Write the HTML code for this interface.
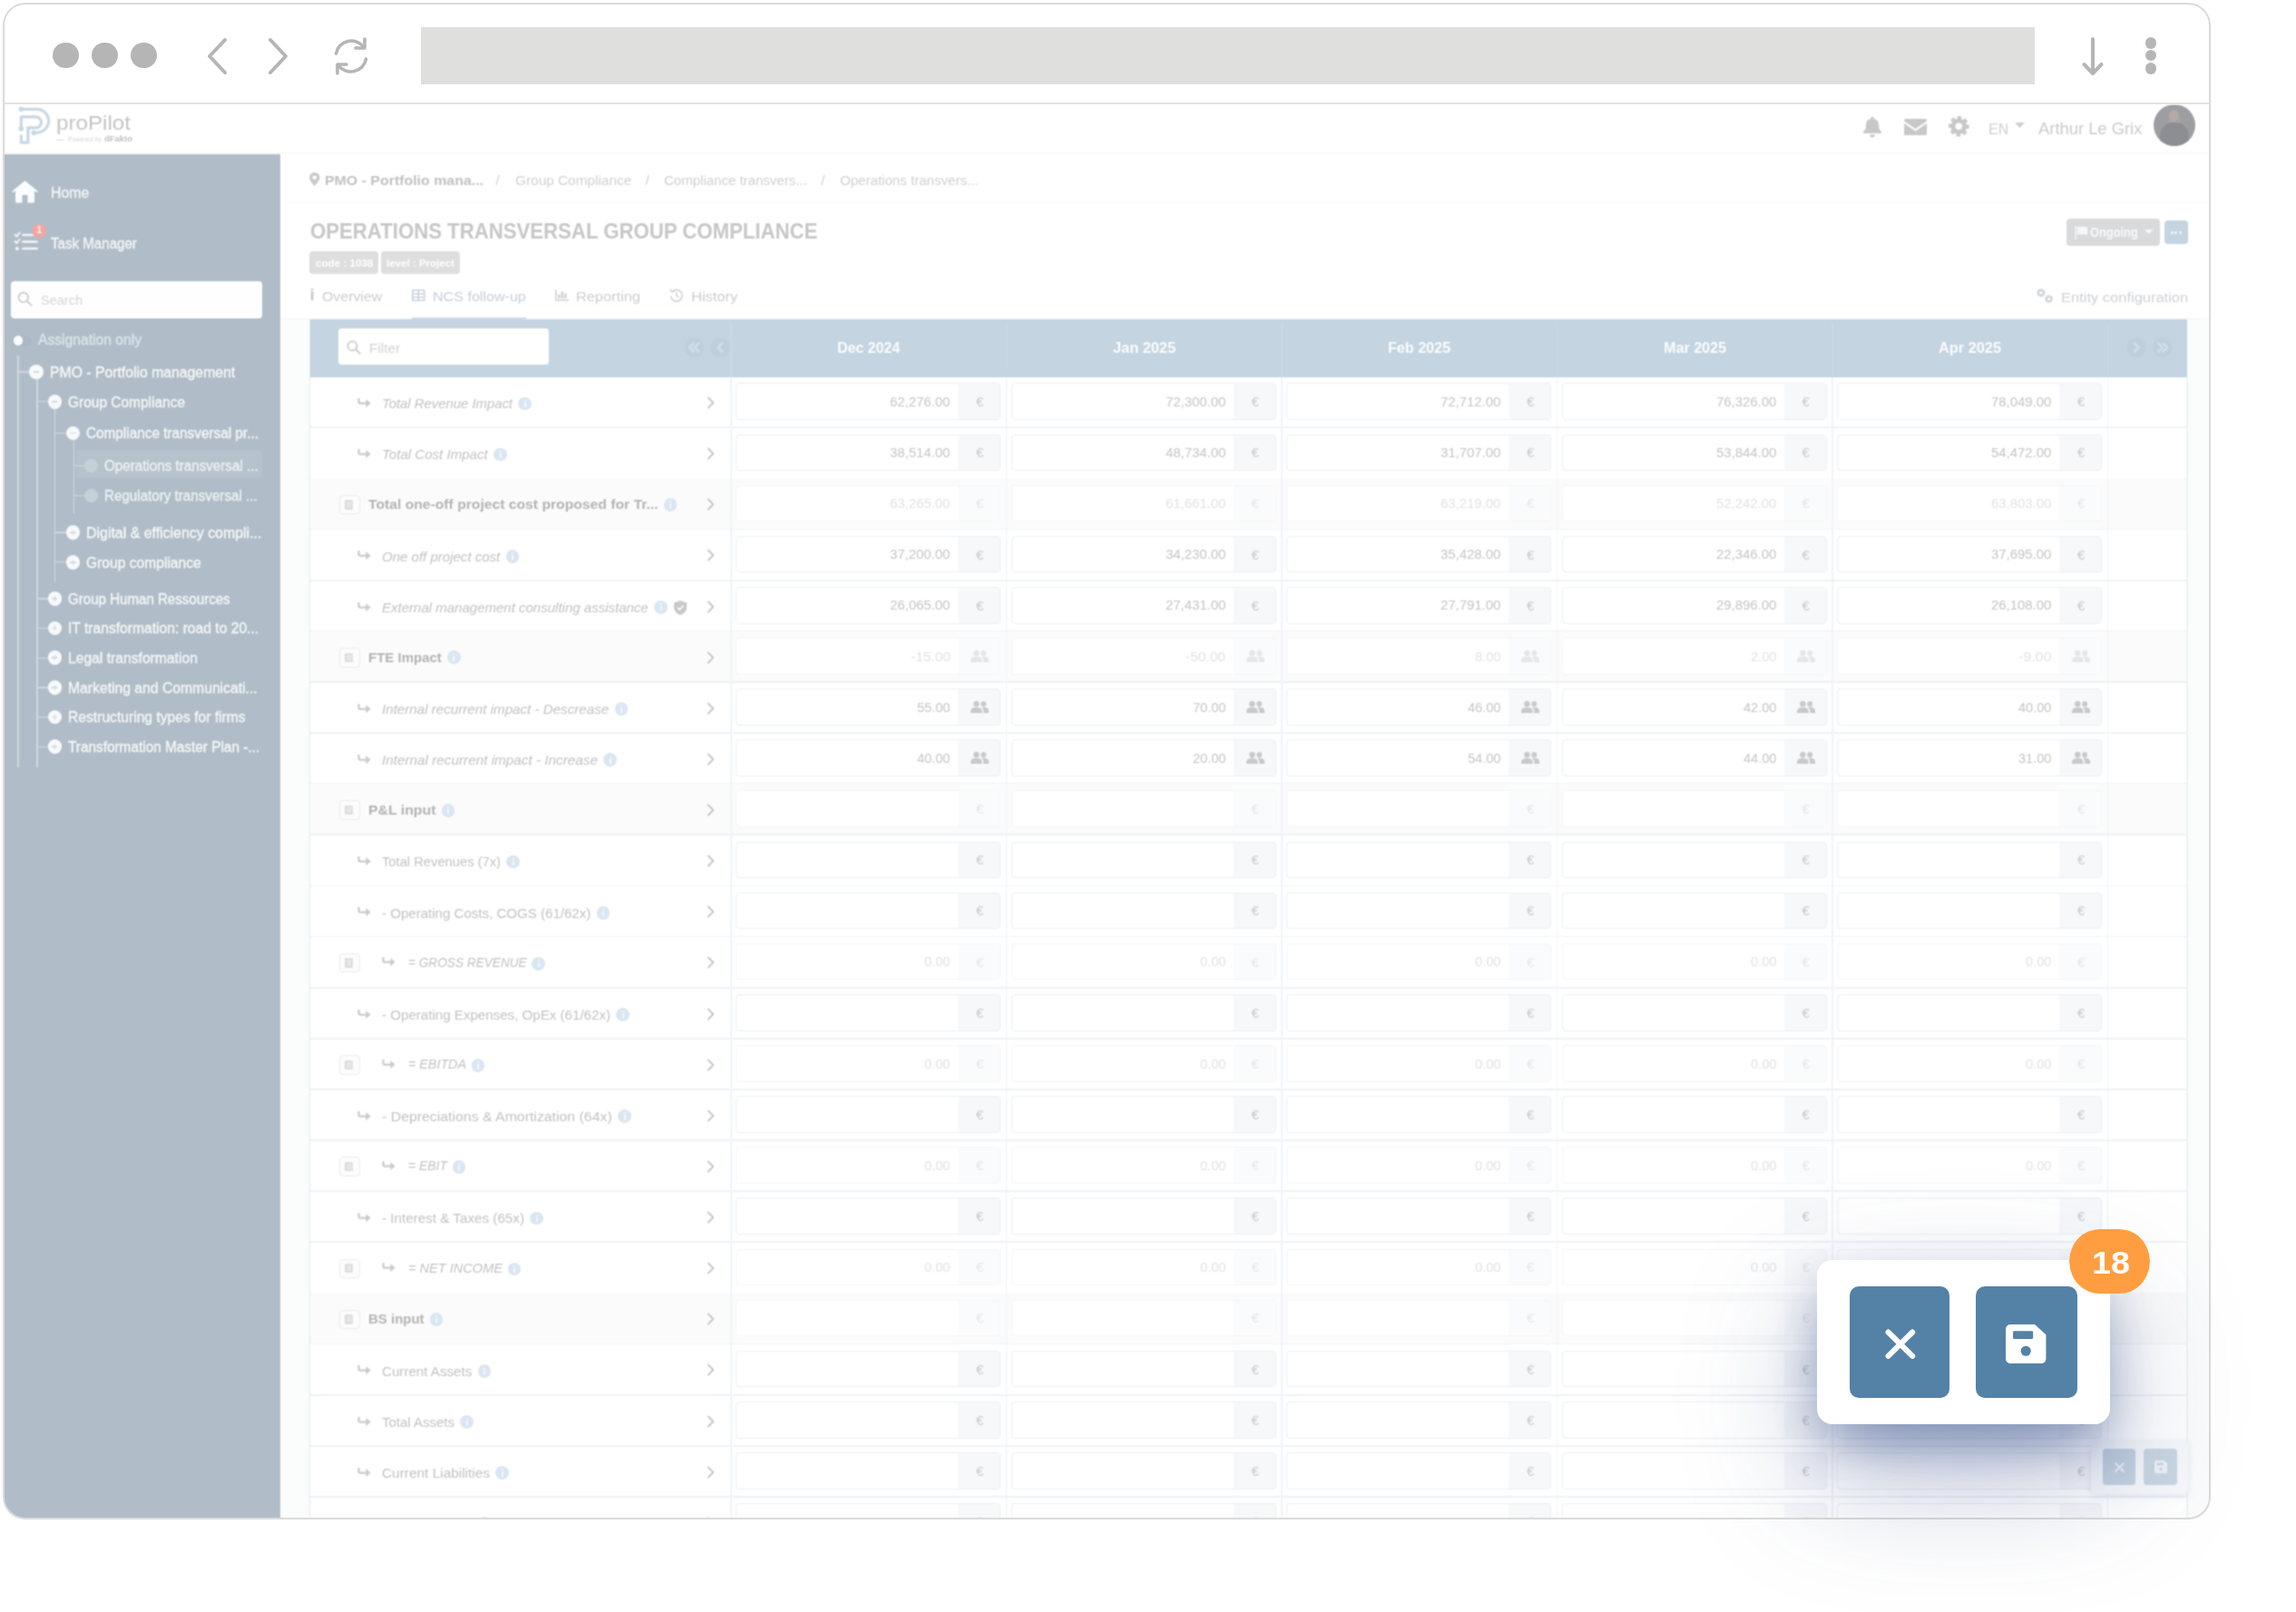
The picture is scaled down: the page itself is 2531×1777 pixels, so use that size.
<!DOCTYPE html>
<html lang="en"><head><meta charset="utf-8"><title>proPilot - NCS follow-up</title>
<style>
html,body{margin:0;padding:0;background:#fff;}
body{width:2531px;height:1777px;position:relative;overflow:hidden;font-family:"Liberation Sans", sans-serif;}
div,svg,span.t{position:absolute;}
span.t{white-space:nowrap;line-height:1;transform-origin:0 50%;}
#app{left:0;top:0;width:2531px;height:1777px;clip-path:inset(115.4px 94.4px 102.7px 4px round 0 0 23px 23px);filter:url(#soft);}
#chrome{left:0;top:0;width:2531px;height:116px;clip-path:inset(4px 94.4px 0 4px round 23px 23px 0 0);}
#frame{left:2.6px;top:2.6px;width:2430.4px;height:1668.1px;border:2.5px solid #dbdbd9;border-radius:25px;pointer-events:none;}
</style></head>
<body>
<svg width="0" height="0" style="left:0;top:0"><filter id="soft" x="0" y="0" width="100%" height="100%" color-interpolation-filters="sRGB"><feConvolveMatrix order="3" kernelMatrix="1 2 1 2 4 2 1 2 1" divisor="16" edgeMode="duplicate" preserveAlpha="true"/></filter></svg>
<div id="app">
<div style="left:0.0px;top:100.0px;width:2531.0px;height:1677.0px;background:#fff;"></div>
<div style="left:0.0px;top:167.8px;width:2531.0px;height:1.5px;background:#f1f3f5;"></div>
<svg style="left:19.0px;top:115.6px;" width="41.0" height="45.4" viewBox="0 0 38 42"><g fill="none" stroke="#c9d8e3" stroke-width="3" stroke-linejoin="round"><path d="M4 4 H20 A12 12 0 0 1 20 28 H17"/><path d="M4 24 V12 H19 A5.5 5.5 0 0 1 19 23 H11 V38 H4 V30"/></g><circle cx="4" cy="4" r="2.6" fill="#c9d8e3"/><circle cx="4" cy="24" r="2.6" fill="#c9d8e3"/><circle cx="17" cy="28" r="2.6" fill="#c9d8e3"/></svg>
<span class="t" id="t1" style="left:62.0px;top:124.9px;font-size:22.5px;color:#c4c4c4;transform:scaleX(1.0747);">proPilot</span>
<span class="t" id="t2" style="left:75.0px;top:150.8px;font-size:6.5px;color:#d4d4d4;transform:scaleX(1.0778);">Powered by</span>
<span class="t" id="t3" style="left:114.5px;top:149.4px;font-size:8.5px;color:#c0c0c0;font-weight:700;transform:scaleX(1.1121);">dFakto</span>
<div style="left:62.0px;top:154.2px;width:9.0px;height:0.8px;background:#ddd;"></div>
<svg style="left:2053.0px;top:127.0px;" width="22.0" height="25.0" viewBox="0 0 22 25"><path d="M11 1.5 a1.6 1.6 0 0 1 1.6 1.6 v0.6 a7 7 0 0 1 5.4 6.8 c0 5 1.6 6.4 3 7.8 v1.7 H1 v-1.7 c1.4-1.4 3-2.8 3-7.8 a7 7 0 0 1 5.4-6.8 v-0.6 A1.6 1.6 0 0 1 11 1.5 z M8 21.5 h6 a3 3 0 0 1-6 0 z" fill="#c8c8c8"/></svg>
<svg style="left:2098.5px;top:130.5px;" width="25.0" height="18.5" viewBox="0 0 25 18.5"><path d="M1.5 0 H23.5 A1.5 1.5 0 0 1 25 1.5 V2.6 L12.5 11 L0 2.6 V1.5 A1.5 1.5 0 0 1 1.5 0 z M0 5 L12.5 13.4 L25 5 V17 A1.5 1.5 0 0 1 23.5 18.5 H1.5 A1.5 1.5 0 0 1 0 17 z" fill="#c8c8c8"/></svg>
<svg style="left:2146.9px;top:127.2px;" width="24.6" height="24.6" viewBox="-12.30 -12.30 24.60 24.60"><circle cx="0" cy="0" r="9.49" fill="none" stroke="#c8c8c8" stroke-width="3.62" stroke-dasharray="4.287 3.168" transform="rotate(-11)"/><circle cx="0" cy="0" r="6.33" fill="none" stroke="#c8c8c8" stroke-width="4.97"/></svg>
<span class="t" id="t4" style="left:2192.3px;top:133.8px;font-size:16.5px;color:#cfcfcf;transform:scaleX(0.9685);">EN</span>
<svg style="left:2220.5px;top:134.5px;" width="11.0" height="6.0" viewBox="0 0 11 6"><path d="M0 0 H11 L5.5 6 z" fill="#cfcfcf"/></svg>
<span class="t" id="t5" style="left:2247.2px;top:132.7px;font-size:18.5px;color:#cacaca;transform:scaleX(0.9934);">Arthur Le Grix</span>
<div style="left:2374.0px;top:114.8px;width:46.0px;height:46.0px;border-radius:50%;background:radial-gradient(circle at 50% 40%,#a8a4a6 0 18%,#9d9ea2 19% 100%);overflow:hidden;"><div style="left:17px;top:6px;width:11px;height:13px;border-radius:50%;background:#b5a9a6;"></div><div style="left:7px;top:20px;width:32px;height:34px;border-radius:45% 45% 0 0;background:#8d8e93;"></div></div>
<div style="left:0.0px;top:169.6px;width:309.4px;height:1607.4px;background:#b0bdc8;"></div>
<svg style="left:13.0px;top:197.5px;" width="29.0" height="26.0" viewBox="0 0 29 26"><path d="M14.5 1.2 L28.3 12.6 a0.9 0.9 0 0 1-1.1 1.4 L25 12.3 V24 a1.5 1.5 0 0 1-1.5 1.5 H17.5 V17 H11.5 V25.5 H5.5 A1.5 1.5 0 0 1 4 24 V12.3 L1.8 14 a0.9 0.9 0 0 1-1.1-1.4 z" fill="#fbfcfd"/></svg>
<span class="t" id="t6" style="left:55.5px;top:205.1px;font-size:16.0px;color:#f4f6f8;transform:scaleX(0.9886);-webkit-text-stroke:0.3px currentColor;">Home</span>
<svg style="left:14.5px;top:255.0px;" width="27.0" height="22.0" viewBox="0 0 27 22"><g fill="none" stroke="#f1f4f6" stroke-width="2.6" stroke-linecap="round"><path d="M10.5 4 H25.5 M10.5 11.5 H25.5 M10.5 19 H25.5"/><path d="M1.5 3.6 L3.4 5.6 L6.6 1.6 M1.5 11 L3.4 13 L6.6 9" stroke-width="2" stroke-linejoin="round"/></g><circle cx="3.8" cy="19" r="2" fill="#f1f4f6"/></svg>
<div style="left:35.4px;top:246.6px;width:15.6px;height:15.6px;background:#f0a6a4;border-radius:50%;"></div>
<span class="t" id="t7" style="left:40.6px;top:249.4px;font-size:10.0px;color:#fdf3f3;font-weight:700;">1</span>
<span class="t" id="t8" style="left:55.9px;top:260.9px;font-size:16.0px;color:#f4f6f8;transform:scaleX(0.9443);-webkit-text-stroke:0.3px currentColor;">Task Manager</span>
<div style="left:11.5px;top:310.0px;width:277.1px;height:40.8px;background:#fefefe;border-radius:4px;"></div>
<svg style="left:19.0px;top:321.0px;" width="17.0" height="17.0" viewBox="0 0 17 17"><circle cx="6.8" cy="6.8" r="5.3" fill="none" stroke="#cfcfcf" stroke-width="1.9"/><path d="M10.8 10.8 L15.6 15.6" stroke="#cfcfcf" stroke-width="2" stroke-linecap="round"/></svg>
<span class="t" id="t9" style="left:44.7px;top:323.3px;font-size:15.0px;color:#d6d6d6;transform:scaleX(0.9678);">Search</span>
<div style="left:13.5px;top:369.5px;width:21.5px;height:12.0px;background:#abb8c3;border-radius:6px;"></div>
<div style="left:14.8px;top:370.3px;width:10.4px;height:10.4px;background:#fafbfc;border-radius:50%;"></div>
<span class="t" id="t10" style="left:42.4px;top:367.0px;font-size:16.0px;color:#dde4ea;transform:scaleX(0.9784);-webkit-text-stroke:0.3px currentColor;">Assignation only</span>
<div style="left:19.4px;top:392.0px;width:1.4px;height:454.0px;background:#cfd7de;"></div>
<div style="left:40.3px;top:418.0px;width:1.4px;height:428.0px;background:#cfd7de;"></div>
<div style="left:59.9px;top:451.0px;width:1.4px;height:190.0px;background:#cfd7de;"></div>
<div style="left:80.5px;top:485.0px;width:1.4px;height:81.0px;background:#cfd7de;"></div>
<div style="left:83.5px;top:495.5px;width:205.5px;height:31.0px;background:#b6c2cc;border-radius:3px;"></div>
<div style="left:20.2px;top:409.2px;width:14.0px;height:1.4px;background:#cfd7de;"></div>
<div style="left:32.4px;top:402.1px;width:15.6px;height:15.6px;background:#f7f9fa;border-radius:50%;"></div>
<div style="left:37.0px;top:409.1px;width:6.4px;height:1.6px;background:#d3dbe2;"></div>
<span class="t" id="t11" style="left:54.6px;top:402.6px;font-size:16.0px;color:#f6f8f9;transform:scaleX(0.9855);-webkit-text-stroke:0.3px currentColor;">PMO - Portfolio management</span>
<div style="left:40.4px;top:442.1px;width:14.0px;height:1.4px;background:#cfd7de;"></div>
<div style="left:52.6px;top:435.0px;width:15.6px;height:15.6px;background:#f7f9fa;border-radius:50%;"></div>
<div style="left:57.1px;top:442.0px;width:6.4px;height:1.6px;background:#d3dbe2;"></div>
<span class="t" id="t12" style="left:74.8px;top:435.5px;font-size:16.0px;color:#f6f8f9;transform:scaleX(0.9673);-webkit-text-stroke:0.3px currentColor;">Group Compliance</span>
<div style="left:60.5px;top:476.8px;width:14.0px;height:1.4px;background:#cfd7de;"></div>
<div style="left:72.7px;top:469.7px;width:15.6px;height:15.6px;background:#f7f9fa;border-radius:50%;"></div>
<div style="left:77.3px;top:476.7px;width:6.4px;height:1.6px;background:#d3dbe2;"></div>
<span class="t" id="t13" style="left:95.1px;top:470.2px;font-size:16.0px;color:#f6f8f9;transform:scaleX(0.9576);-webkit-text-stroke:0.3px currentColor;">Compliance transversal pr...</span>
<div style="left:80.7px;top:513.0px;width:14.0px;height:1.4px;background:#cfd7de;"></div>
<div style="left:93.1px;top:506.1px;width:15.2px;height:15.2px;background:#c6d0d9;border-radius:50%;"></div>
<span class="t" id="t14" style="left:115.3px;top:506.4px;font-size:16.0px;color:#eef2f5;transform:scaleX(0.9491);-webkit-text-stroke:0.3px currentColor;">Operations transversal ...</span>
<div style="left:80.7px;top:545.9px;width:14.0px;height:1.4px;background:#cfd7de;"></div>
<div style="left:93.1px;top:539.0px;width:15.2px;height:15.2px;background:#c6d0d9;border-radius:50%;"></div>
<span class="t" id="t15" style="left:115.3px;top:539.3px;font-size:16.0px;color:#eef2f5;transform:scaleX(0.9482);-webkit-text-stroke:0.3px currentColor;">Regulatory transversal ...</span>
<div style="left:60.5px;top:586.2px;width:14.0px;height:1.4px;background:#cfd7de;"></div>
<div style="left:72.7px;top:579.1px;width:15.6px;height:15.6px;background:#f7f9fa;border-radius:50%;"></div>
<div style="left:77.3px;top:586.1px;width:6.4px;height:1.6px;background:#d3dbe2;"></div>
<div style="left:79.7px;top:583.7px;width:1.6px;height:6.4px;background:#d3dbe2;"></div>
<span class="t" id="t16" style="left:95.1px;top:579.6px;font-size:16.0px;color:#f6f8f9;transform:scaleX(0.9946);-webkit-text-stroke:0.3px currentColor;">Digital &amp; efficiency compli...</span>
<div style="left:60.5px;top:619.1px;width:14.0px;height:1.4px;background:#cfd7de;"></div>
<div style="left:72.7px;top:612.0px;width:15.6px;height:15.6px;background:#f7f9fa;border-radius:50%;"></div>
<div style="left:77.3px;top:619.0px;width:6.4px;height:1.6px;background:#d3dbe2;"></div>
<div style="left:79.7px;top:616.6px;width:1.6px;height:6.4px;background:#d3dbe2;"></div>
<span class="t" id="t17" style="left:95.1px;top:612.5px;font-size:16.0px;color:#f6f8f9;transform:scaleX(0.9758);-webkit-text-stroke:0.3px currentColor;">Group compliance</span>
<div style="left:40.4px;top:659.3px;width:14.0px;height:1.4px;background:#cfd7de;"></div>
<div style="left:52.6px;top:652.2px;width:15.6px;height:15.6px;background:#f7f9fa;border-radius:50%;"></div>
<div style="left:57.1px;top:659.2px;width:6.4px;height:1.6px;background:#d3dbe2;"></div>
<div style="left:59.6px;top:656.8px;width:1.6px;height:6.4px;background:#d3dbe2;"></div>
<span class="t" id="t18" style="left:74.8px;top:652.7px;font-size:16.0px;color:#f6f8f9;transform:scaleX(0.9431);-webkit-text-stroke:0.3px currentColor;">Group Human Ressources</span>
<div style="left:40.4px;top:691.6px;width:14.0px;height:1.4px;background:#cfd7de;"></div>
<div style="left:52.6px;top:684.5px;width:15.6px;height:15.6px;background:#f7f9fa;border-radius:50%;"></div>
<div style="left:57.1px;top:691.5px;width:6.4px;height:1.6px;background:#d3dbe2;"></div>
<div style="left:59.6px;top:689.1px;width:1.6px;height:6.4px;background:#d3dbe2;"></div>
<span class="t" id="t19" style="left:74.8px;top:685.0px;font-size:16.0px;color:#f6f8f9;transform:scaleX(0.9778);-webkit-text-stroke:0.3px currentColor;">IT transformation: road to 20...</span>
<div style="left:40.4px;top:724.5px;width:14.0px;height:1.4px;background:#cfd7de;"></div>
<div style="left:52.6px;top:717.4px;width:15.6px;height:15.6px;background:#f7f9fa;border-radius:50%;"></div>
<div style="left:57.1px;top:724.4px;width:6.4px;height:1.6px;background:#d3dbe2;"></div>
<div style="left:59.6px;top:722.0px;width:1.6px;height:6.4px;background:#d3dbe2;"></div>
<span class="t" id="t20" style="left:74.8px;top:717.9px;font-size:16.0px;color:#f6f8f9;transform:scaleX(0.9794);-webkit-text-stroke:0.3px currentColor;">Legal transformation</span>
<div style="left:40.4px;top:757.4px;width:14.0px;height:1.4px;background:#cfd7de;"></div>
<div style="left:52.6px;top:750.3px;width:15.6px;height:15.6px;background:#f7f9fa;border-radius:50%;"></div>
<div style="left:57.1px;top:757.3px;width:6.4px;height:1.6px;background:#d3dbe2;"></div>
<div style="left:59.6px;top:754.9px;width:1.6px;height:6.4px;background:#d3dbe2;"></div>
<span class="t" id="t21" style="left:74.8px;top:750.8px;font-size:16.0px;color:#f6f8f9;transform:scaleX(0.9817);-webkit-text-stroke:0.3px currentColor;">Marketing and Communicati...</span>
<div style="left:40.4px;top:789.7px;width:14.0px;height:1.4px;background:#cfd7de;"></div>
<div style="left:52.6px;top:782.6px;width:15.6px;height:15.6px;background:#f7f9fa;border-radius:50%;"></div>
<div style="left:57.1px;top:789.6px;width:6.4px;height:1.6px;background:#d3dbe2;"></div>
<div style="left:59.6px;top:787.2px;width:1.6px;height:6.4px;background:#d3dbe2;"></div>
<span class="t" id="t22" style="left:74.8px;top:783.1px;font-size:16.0px;color:#f6f8f9;transform:scaleX(0.9779);-webkit-text-stroke:0.3px currentColor;">Restructuring types for firms</span>
<div style="left:40.4px;top:822.5px;width:14.0px;height:1.4px;background:#cfd7de;"></div>
<div style="left:52.6px;top:815.4px;width:15.6px;height:15.6px;background:#f7f9fa;border-radius:50%;"></div>
<div style="left:57.1px;top:822.4px;width:6.4px;height:1.6px;background:#d3dbe2;"></div>
<div style="left:59.6px;top:820.0px;width:1.6px;height:6.4px;background:#d3dbe2;"></div>
<span class="t" id="t23" style="left:74.8px;top:815.9px;font-size:16.0px;color:#f6f8f9;transform:scaleX(0.9601);-webkit-text-stroke:0.3px currentColor;">Transformation Master Plan -...</span>
<div style="left:309.4px;top:169.3px;width:2221.6px;height:181.9px;background:#fff;"></div>
<div style="left:309.4px;top:351.2px;width:2221.6px;height:1425.8px;background:#fbfcfc;"></div>
<div style="left:309.4px;top:223.0px;width:2221.6px;height:1.4px;background:#f9fafa;"></div>
<div style="left:309.4px;top:350.5px;width:2221.6px;height:1.3px;background:#f2f4f6;"></div>
<svg style="left:341.2px;top:189.5px;" width="11.5" height="15.5" viewBox="0 0 11.5 15.5"><path d="M5.75 0 A5.75 5.75 0 0 1 11.5 5.75 C11.5 9 7.5 12.5 5.75 15.5 C4 12.5 0 9 0 5.75 A5.75 5.75 0 0 1 5.75 0 z M5.75 3.4 a2.3 2.3 0 1 0 0.01 0 z" fill="#c9c9c9" fill-rule="evenodd"/></svg>
<span class="t" id="t24" style="left:358.0px;top:191.3px;font-size:15.5px;color:#c2c2c2;font-weight:700;transform:scaleX(1.0263);">PMO - Portfolio mana...</span>
<span class="t" id="t25" style="left:546.5px;top:191.3px;font-size:15.5px;color:#d0d0d0;">/</span>
<span class="t" id="t26" style="left:567.8px;top:191.3px;font-size:15.5px;color:#d0d0d0;transform:scaleX(0.9920);">Group Compliance</span>
<span class="t" id="t27" style="left:711.5px;top:191.3px;font-size:15.5px;color:#d0d0d0;">/</span>
<span class="t" id="t28" style="left:732.3px;top:191.3px;font-size:15.5px;color:#d0d0d0;transform:scaleX(0.9686);">Compliance transvers...</span>
<span class="t" id="t29" style="left:905.0px;top:191.3px;font-size:15.5px;color:#d0d0d0;">/</span>
<span class="t" id="t30" style="left:925.7px;top:191.3px;font-size:15.5px;color:#d0d0d0;transform:scaleX(0.9732);">Operations transvers...</span>
<span class="t" id="t31" style="left:342.0px;top:242.6px;font-size:24.5px;color:#c8c6c6;font-weight:700;transform:scaleX(0.9050);">OPERATIONS TRANSVERSAL GROUP COMPLIANCE</span>
<div style="left:341.4px;top:277.4px;width:75.2px;height:24.8px;background:#dedede;border-radius:4px;"></div>
<span class="t" id="t32" style="left:347.5px;top:285.4px;font-size:11.5px;color:#ffffff;font-weight:700;transform:scaleX(1.0135);">code : 1038</span>
<div style="left:420.0px;top:277.4px;width:87.2px;height:24.8px;background:#dedede;border-radius:4px;"></div>
<span class="t" id="t33" style="left:426.0px;top:285.4px;font-size:11.5px;color:#ffffff;font-weight:700;transform:scaleX(1.0027);">level : Project</span>
<div style="left:2277.9px;top:240.9px;width:103.2px;height:30.1px;background:#d9dadc;border-radius:4px;"></div>
<svg style="left:2287.0px;top:248.5px;" width="14.5" height="15.0" viewBox="0 0 14.5 15"><path d="M0.4 0 h1.5 v15 h-1.5 z M2.8 1 h11.3 v8.5 h-11.3 z" fill="#f7f7f7"/></svg>
<span class="t" id="t34" style="left:2304.0px;top:249.1px;font-size:14.0px;color:#f8f8f8;font-weight:700;transform:scaleX(0.9175);">Ongoing</span>
<svg style="left:2364.0px;top:253.0px;" width="9.5" height="5.2" viewBox="0 0 9.5 5.2"><path d="M0 0 H9.5 L4.75 5.2 z" fill="#f7f7f7"/></svg>
<div style="left:2385.5px;top:243.0px;width:26.7px;height:26.0px;background:#c4d4e0;border-radius:4px;"></div>
<div style="left:2393.1px;top:254.5px;width:3.0px;height:3.0px;background:#f3f6f9;border-radius:50%;"></div>
<div style="left:2397.3px;top:254.5px;width:3.0px;height:3.0px;background:#f3f6f9;border-radius:50%;"></div>
<div style="left:2401.5px;top:254.5px;width:3.0px;height:3.0px;background:#f3f6f9;border-radius:50%;"></div>
<span class="t" id="t35" style="left:341.5px;top:315.2px;font-size:19.0px;color:#c9c9c9;font-weight:700;font-family:"Liberation Serif",serif;">i</span>
<span class="t" id="t36" style="left:355.3px;top:319.2px;font-size:15.5px;color:#cdcdcd;transform:scaleX(1.0246);">Overview</span>
<svg style="left:454.0px;top:318.6px;" width="14.5" height="13.0" viewBox="0 0 15.5 13.5"><g fill="none" stroke="#c3cfda" stroke-width="1.5"><rect x="0.75" y="0.75" width="14" height="12"/><path d="M0.75 5 H14.75 M7.75 0.75 V12.75 M0.75 9 H14.75"/></g></svg>
<span class="t" id="t37" style="left:477.2px;top:319.2px;font-size:15.5px;color:#c3cfda;transform:scaleX(1.0377);">NCS follow-up</span>
<div style="left:453.9px;top:349.6px;width:126.1px;height:2.2px;background:#cddbe6;"></div>
<svg style="left:611.5px;top:318.8px;" width="15.0" height="13.0" viewBox="0 0 16 13.5"><g fill="#d0d0d0"><path d="M0 0 h1.6 v11.9 h14.4 v1.6 h-16 z"/><rect x="3.3" y="6" width="2.6" height="4.5"/><rect x="7" y="2.5" width="2.6" height="8"/><rect x="10.7" y="4.5" width="2.6" height="6"/></g></svg>
<span class="t" id="t38" style="left:635.0px;top:319.2px;font-size:15.5px;color:#cdcdcd;transform:scaleX(1.0533);">Reporting</span>
<svg style="left:737.8px;top:317.5px;" width="15.5" height="15.5" viewBox="0 0 16 16"><g fill="none" stroke="#cdcdcd" stroke-width="1.5" stroke-linecap="round"><path d="M3.2 3.6 A6.5 6.5 0 1 1 1.6 9.2"/><path d="M0.9 1.6 L3 4 L5.6 2.8"/><path d="M8 4.6 V8.3 L10.3 9.8"/></g></svg>
<span class="t" id="t39" style="left:761.6px;top:319.2px;font-size:15.5px;color:#cdcdcd;transform:scaleX(1.0615);">History</span>
<svg style="left:2243.7px;top:316.7px;" width="11.6" height="11.6" viewBox="-5.80 -5.80 11.60 11.60"><circle cx="0" cy="0" r="4.03" fill="none" stroke="#cfd3d8" stroke-width="1.54" stroke-dasharray="1.821 1.346" transform="rotate(-11)"/><circle cx="0" cy="0" r="2.69" fill="none" stroke="#cfd3d8" stroke-width="2.11"/></svg>
<svg style="left:2252.7px;top:323.9px;" width="11.2" height="11.2" viewBox="-5.60 -5.60 11.20 11.20"><circle cx="0" cy="0" r="3.86" fill="none" stroke="#cfd3d8" stroke-width="1.47" stroke-dasharray="1.745 1.290" transform="rotate(-11)"/><circle cx="0" cy="0" r="2.58" fill="none" stroke="#cfd3d8" stroke-width="2.02"/></svg>
<span class="t" id="t40" style="left:2272.0px;top:319.7px;font-size:15.5px;color:#cdd1d6;transform:scaleX(1.0635);">Entity configuration</span>
<div style="left:341.6px;top:352.3px;width:2069.6px;height:1424.7px;background:#fff;"></div>
<div style="left:341.6px;top:352.3px;width:2069.6px;height:63.3px;background:#c4d4e0;"></div>
<div style="left:373.4px;top:362.0px;width:231.4px;height:40.0px;background:#fff;border-radius:4px;"></div>
<svg style="left:381.5px;top:374.5px;" width="16.0" height="16.0" viewBox="0 0 17 17"><circle cx="6.8" cy="6.8" r="5.3" fill="none" stroke="#c9c9c9" stroke-width="1.9"/><path d="M10.8 10.8 L15.6 15.6" stroke="#c9c9c9" stroke-width="2" stroke-linecap="round"/></svg>
<span class="t" id="t41" style="left:406.9px;top:375.6px;font-size:15.0px;color:#d2d2d2;transform:scaleX(1.0227);">Filter</span>
<div style="left:754.0px;top:371.6px;width:22.0px;height:22.0px;background:#bfd0dc;border-radius:50%;"></div>
<svg style="left:757.0px;top:374.6px;" width="16.0" height="16.0" viewBox="-8 -8 16 16"><path d="M-0.5 -4.5 L-5 0 L-0.5 4.5 M5 -4.5 L0.5 0 L5 4.5" fill="none" stroke="#d2dfe9" stroke-width="2.5" stroke-linecap="round" stroke-linejoin="round"/></svg>
<div style="left:782.6px;top:371.6px;width:22.0px;height:22.0px;background:#bfd0dc;border-radius:50%;"></div>
<svg style="left:785.6px;top:374.6px;" width="16.0" height="16.0" viewBox="-8 -8 16 16"><path d="M2 -4.5 L-2.5 0 L2 4.5" fill="none" stroke="#d2dfe9" stroke-width="2.5" stroke-linecap="round" stroke-linejoin="round"/></svg>
<div style="left:2344.0px;top:371.6px;width:22.0px;height:22.0px;background:#bfd0dc;border-radius:50%;"></div>
<svg style="left:2347.0px;top:374.6px;" width="16.0" height="16.0" viewBox="-8 -8 16 16"><path d="M-2 -4.5 L2.5 0 L-2 4.5" fill="none" stroke="#d2dfe9" stroke-width="2.5" stroke-linecap="round" stroke-linejoin="round"/></svg>
<div style="left:2372.6px;top:371.6px;width:22.0px;height:22.0px;background:#bfd0dc;border-radius:50%;"></div>
<svg style="left:2375.6px;top:374.6px;" width="16.0" height="16.0" viewBox="-8 -8 16 16"><path d="M0.5 -4.5 L5 0 L0.5 4.5 M-5 -4.5 L-0.5 0 L-5 4.5" fill="none" stroke="#d2dfe9" stroke-width="2.5" stroke-linecap="round" stroke-linejoin="round"/></svg>
<span class="t" id="t42" style="left:923.2px;top:375.7px;font-size:16.0px;color:#fbfcfd;font-weight:700;transform:scaleX(0.9944);">Dec 2024</span>
<span class="t" id="t43" style="left:1226.8px;top:375.7px;font-size:16.0px;color:#fbfcfd;font-weight:700;transform:scaleX(1.0206);">Jan 2025</span>
<span class="t" id="t44" style="left:1530.2px;top:375.7px;font-size:16.0px;color:#fbfcfd;font-weight:700;transform:scaleX(1.0075);">Feb 2025</span>
<span class="t" id="t45" style="left:1833.8px;top:375.7px;font-size:16.0px;color:#fbfcfd;font-weight:700;transform:scaleX(1.0073);">Mar 2025</span>
<span class="t" id="t46" style="left:2137.2px;top:375.7px;font-size:16.0px;color:#fbfcfd;font-weight:700;transform:scaleX(1.0208);">Apr 2025</span>
<div style="left:805.3px;top:356.0px;width:1.4px;height:59.6px;background:#cbd9e4;"></div>
<div style="left:1108.8px;top:356.0px;width:1.4px;height:59.6px;background:#cbd9e4;"></div>
<div style="left:1412.3px;top:356.0px;width:1.4px;height:59.6px;background:#cbd9e4;"></div>
<div style="left:1715.8px;top:356.0px;width:1.4px;height:59.6px;background:#cbd9e4;"></div>
<div style="left:2019.3px;top:356.0px;width:1.4px;height:59.6px;background:#cbd9e4;"></div>
<div style="left:2322.8px;top:356.0px;width:1.4px;height:59.6px;background:#cbd9e4;"></div>
<div style="left:341.6px;top:470.4px;width:2069.6px;height:1.8px;background:#eef2f7;"></div>
<svg style="left:393.8px;top:439.1px;" width="15.5" height="11.0" viewBox="0 0 15 11"><path d="M1.3 0.8 V4 Q1.3 5.6 3 5.6 H10" fill="none" stroke="#cbcbcb" stroke-width="2.3" stroke-linecap="round"/><path d="M9.2 1 L14.4 5.6 L9.2 10.2 z" fill="#cbcbcb"/></svg>
<span class="t" id="t47" style="left:421.3px;top:437.2px;font-size:15.5px;color:#c2c2c2;font-style:italic;transform:scaleX(0.9586);">Total Revenue Impact</span>
<div style="left:571.4px;top:437.6px;width:14.8px;height:14.8px;background:#dae6f1;border-radius:50%;"></div>
<div style="left:577.8px;top:443.6px;width:2.0px;height:5.4px;background:#f3f7fa;"></div>
<div style="left:577.7px;top:440.6px;width:2.2px;height:2.0px;background:#f3f7fa;border-radius:50%;"></div>
<svg style="left:779.0px;top:437.1px;" width="9.0" height="14.0" viewBox="0 0 9 14"><path d="M1.8 1.5 L7.2 7 L1.8 12.5" fill="none" stroke="#c6c6c6" stroke-width="1.8" stroke-linecap="round" stroke-linejoin="round"/></svg>
<div style="left:811.2px;top:422.4px;width:292.2px;height:40.8px;background:#fff;border:1.3px solid #eceef2;border-radius:4px;box-sizing:border-box;"></div>
<div style="left:1056.2px;top:423.4px;width:46.2px;height:38.8px;background:#f7f8fa;border-radius:0 3px 3px 0;"></div>
<span class="t" id="t48" style="left:1076.0px;top:435.1px;font-size:15.0px;color:#c9c9c9;">€</span>
<span class="t" id="t49" style="left:981.3px;top:434.9px;font-size:15.0px;color:#c4c4c4;transform:scaleX(0.9920);">62,276.00</span>
<div style="left:1114.7px;top:422.4px;width:292.2px;height:40.8px;background:#fff;border:1.3px solid #eceef2;border-radius:4px;box-sizing:border-box;"></div>
<div style="left:1359.7px;top:423.4px;width:46.2px;height:38.8px;background:#f7f8fa;border-radius:0 3px 3px 0;"></div>
<span class="t" id="t50" style="left:1379.5px;top:435.1px;font-size:15.0px;color:#c9c9c9;">€</span>
<span class="t" id="t51" style="left:1284.8px;top:434.9px;font-size:15.0px;color:#c4c4c4;transform:scaleX(0.9920);">72,300.00</span>
<div style="left:1418.2px;top:422.4px;width:292.2px;height:40.8px;background:#fff;border:1.3px solid #eceef2;border-radius:4px;box-sizing:border-box;"></div>
<div style="left:1663.2px;top:423.4px;width:46.2px;height:38.8px;background:#f7f8fa;border-radius:0 3px 3px 0;"></div>
<span class="t" id="t52" style="left:1683.0px;top:435.1px;font-size:15.0px;color:#c9c9c9;">€</span>
<span class="t" id="t53" style="left:1588.3px;top:434.9px;font-size:15.0px;color:#c4c4c4;transform:scaleX(0.9920);">72,712.00</span>
<div style="left:1721.7px;top:422.4px;width:292.2px;height:40.8px;background:#fff;border:1.3px solid #eceef2;border-radius:4px;box-sizing:border-box;"></div>
<div style="left:1966.7px;top:423.4px;width:46.2px;height:38.8px;background:#f7f8fa;border-radius:0 3px 3px 0;"></div>
<span class="t" id="t54" style="left:1986.5px;top:435.1px;font-size:15.0px;color:#c9c9c9;">€</span>
<span class="t" id="t55" style="left:1891.8px;top:434.9px;font-size:15.0px;color:#c4c4c4;transform:scaleX(0.9920);">76,326.00</span>
<div style="left:2025.2px;top:422.4px;width:292.2px;height:40.8px;background:#fff;border:1.3px solid #eceef2;border-radius:4px;box-sizing:border-box;"></div>
<div style="left:2270.2px;top:423.4px;width:46.2px;height:38.8px;background:#f7f8fa;border-radius:0 3px 3px 0;"></div>
<span class="t" id="t56" style="left:2290.0px;top:435.1px;font-size:15.0px;color:#c9c9c9;">€</span>
<span class="t" id="t57" style="left:2195.3px;top:434.9px;font-size:15.0px;color:#c4c4c4;transform:scaleX(0.9920);">78,049.00</span>
<div style="left:341.6px;top:526.5px;width:2069.6px;height:1.8px;background:#eef2f7;"></div>
<svg style="left:393.8px;top:495.2px;" width="15.5" height="11.0" viewBox="0 0 15 11"><path d="M1.3 0.8 V4 Q1.3 5.6 3 5.6 H10" fill="none" stroke="#cbcbcb" stroke-width="2.3" stroke-linecap="round"/><path d="M9.2 1 L14.4 5.6 L9.2 10.2 z" fill="#cbcbcb"/></svg>
<span class="t" id="t58" style="left:421.3px;top:493.4px;font-size:15.5px;color:#c2c2c2;font-style:italic;transform:scaleX(0.9721);">Total Cost Impact</span>
<div style="left:544.1px;top:493.7px;width:14.8px;height:14.8px;background:#dae6f1;border-radius:50%;"></div>
<div style="left:550.5px;top:499.7px;width:2.0px;height:5.4px;background:#f3f7fa;"></div>
<div style="left:550.4px;top:496.7px;width:2.2px;height:2.0px;background:#f3f7fa;border-radius:50%;"></div>
<svg style="left:779.0px;top:493.2px;" width="9.0" height="14.0" viewBox="0 0 9 14"><path d="M1.8 1.5 L7.2 7 L1.8 12.5" fill="none" stroke="#c6c6c6" stroke-width="1.8" stroke-linecap="round" stroke-linejoin="round"/></svg>
<div style="left:811.2px;top:478.5px;width:292.2px;height:40.8px;background:#fff;border:1.3px solid #eceef2;border-radius:4px;box-sizing:border-box;"></div>
<div style="left:1056.2px;top:479.5px;width:46.2px;height:38.8px;background:#f7f8fa;border-radius:0 3px 3px 0;"></div>
<span class="t" id="t59" style="left:1076.0px;top:491.2px;font-size:15.0px;color:#c9c9c9;">€</span>
<span class="t" id="t60" style="left:981.3px;top:491.0px;font-size:15.0px;color:#c4c4c4;transform:scaleX(0.9920);">38,514.00</span>
<div style="left:1114.7px;top:478.5px;width:292.2px;height:40.8px;background:#fff;border:1.3px solid #eceef2;border-radius:4px;box-sizing:border-box;"></div>
<div style="left:1359.7px;top:479.5px;width:46.2px;height:38.8px;background:#f7f8fa;border-radius:0 3px 3px 0;"></div>
<span class="t" id="t61" style="left:1379.5px;top:491.2px;font-size:15.0px;color:#c9c9c9;">€</span>
<span class="t" id="t62" style="left:1284.8px;top:491.0px;font-size:15.0px;color:#c4c4c4;transform:scaleX(0.9920);">48,734.00</span>
<div style="left:1418.2px;top:478.5px;width:292.2px;height:40.8px;background:#fff;border:1.3px solid #eceef2;border-radius:4px;box-sizing:border-box;"></div>
<div style="left:1663.2px;top:479.5px;width:46.2px;height:38.8px;background:#f7f8fa;border-radius:0 3px 3px 0;"></div>
<span class="t" id="t63" style="left:1683.0px;top:491.2px;font-size:15.0px;color:#c9c9c9;">€</span>
<span class="t" id="t64" style="left:1588.3px;top:491.0px;font-size:15.0px;color:#c4c4c4;transform:scaleX(0.9920);">31,707.00</span>
<div style="left:1721.7px;top:478.5px;width:292.2px;height:40.8px;background:#fff;border:1.3px solid #eceef2;border-radius:4px;box-sizing:border-box;"></div>
<div style="left:1966.7px;top:479.5px;width:46.2px;height:38.8px;background:#f7f8fa;border-radius:0 3px 3px 0;"></div>
<span class="t" id="t65" style="left:1986.5px;top:491.2px;font-size:15.0px;color:#c9c9c9;">€</span>
<span class="t" id="t66" style="left:1891.8px;top:491.0px;font-size:15.0px;color:#c4c4c4;transform:scaleX(0.9920);">53,844.00</span>
<div style="left:2025.2px;top:478.5px;width:292.2px;height:40.8px;background:#fff;border:1.3px solid #eceef2;border-radius:4px;box-sizing:border-box;"></div>
<div style="left:2270.2px;top:479.5px;width:46.2px;height:38.8px;background:#f7f8fa;border-radius:0 3px 3px 0;"></div>
<span class="t" id="t67" style="left:2290.0px;top:491.2px;font-size:15.0px;color:#c9c9c9;">€</span>
<span class="t" id="t68" style="left:2195.3px;top:491.0px;font-size:15.0px;color:#c4c4c4;transform:scaleX(0.9920);">54,472.00</span>
<div style="left:341.6px;top:527.4px;width:2069.6px;height:56.1px;background:#fbfbfb;"></div>
<div style="left:341.6px;top:582.6px;width:2069.6px;height:1.8px;background:#eef2f7;"></div>
<div style="left:373.6px;top:545.6px;width:23.2px;height:21.6px;background:#fcfcfc;border:1.2px solid #ececec;border-radius:4px;box-sizing:border-box;"><div style="left:5.8px;top:4.6px;width:9px;height:10.4px;background:#dedede;border-radius:1.5px;"></div><div style="left:8px;top:6.6px;width:4.6px;height:6px;background:#e8e8e8;"></div></div>
<span class="t" id="t69" style="left:406.0px;top:548.4px;font-size:15.5px;color:#b4b4b4;font-weight:700;transform:scaleX(1.0118);">Total one-off project cost proposed for Tr...</span>
<div style="left:731.6px;top:549.0px;width:14.8px;height:14.8px;background:#dae6f1;border-radius:50%;"></div>
<div style="left:738.0px;top:555.0px;width:2.0px;height:5.4px;background:#f3f7fa;"></div>
<div style="left:737.9px;top:552.0px;width:2.2px;height:2.0px;background:#f3f7fa;border-radius:50%;"></div>
<svg style="left:779.0px;top:549.3px;" width="9.0" height="14.0" viewBox="0 0 9 14"><path d="M1.8 1.5 L7.2 7 L1.8 12.5" fill="none" stroke="#c6c6c6" stroke-width="1.8" stroke-linecap="round" stroke-linejoin="round"/></svg>
<div style="left:811.2px;top:534.6px;width:292.2px;height:40.8px;background:#fff;border:1.3px solid #f4f5f8;border-radius:4px;box-sizing:border-box;"></div>
<div style="left:1056.2px;top:535.6px;width:46.2px;height:38.8px;background:#fafbfc;border-radius:0 3px 3px 0;"></div>
<span class="t" id="t70" style="left:1076.0px;top:547.4px;font-size:15.0px;color:#e6e6e6;">€</span>
<span class="t" id="t71" style="left:981.3px;top:547.2px;font-size:15.0px;color:#e2e2e2;transform:scaleX(0.9920);">63,265.00</span>
<div style="left:1114.7px;top:534.6px;width:292.2px;height:40.8px;background:#fff;border:1.3px solid #f4f5f8;border-radius:4px;box-sizing:border-box;"></div>
<div style="left:1359.7px;top:535.6px;width:46.2px;height:38.8px;background:#fafbfc;border-radius:0 3px 3px 0;"></div>
<span class="t" id="t72" style="left:1379.5px;top:547.4px;font-size:15.0px;color:#e6e6e6;">€</span>
<span class="t" id="t73" style="left:1284.8px;top:547.2px;font-size:15.0px;color:#e2e2e2;transform:scaleX(0.9920);">61,661.00</span>
<div style="left:1418.2px;top:534.6px;width:292.2px;height:40.8px;background:#fff;border:1.3px solid #f4f5f8;border-radius:4px;box-sizing:border-box;"></div>
<div style="left:1663.2px;top:535.6px;width:46.2px;height:38.8px;background:#fafbfc;border-radius:0 3px 3px 0;"></div>
<span class="t" id="t74" style="left:1683.0px;top:547.4px;font-size:15.0px;color:#e6e6e6;">€</span>
<span class="t" id="t75" style="left:1588.3px;top:547.2px;font-size:15.0px;color:#e2e2e2;transform:scaleX(0.9920);">63,219.00</span>
<div style="left:1721.7px;top:534.6px;width:292.2px;height:40.8px;background:#fff;border:1.3px solid #f4f5f8;border-radius:4px;box-sizing:border-box;"></div>
<div style="left:1966.7px;top:535.6px;width:46.2px;height:38.8px;background:#fafbfc;border-radius:0 3px 3px 0;"></div>
<span class="t" id="t76" style="left:1986.5px;top:547.4px;font-size:15.0px;color:#e6e6e6;">€</span>
<span class="t" id="t77" style="left:1891.8px;top:547.2px;font-size:15.0px;color:#e2e2e2;transform:scaleX(0.9920);">52,242.00</span>
<div style="left:2025.2px;top:534.6px;width:292.2px;height:40.8px;background:#fff;border:1.3px solid #f4f5f8;border-radius:4px;box-sizing:border-box;"></div>
<div style="left:2270.2px;top:535.6px;width:46.2px;height:38.8px;background:#fafbfc;border-radius:0 3px 3px 0;"></div>
<span class="t" id="t78" style="left:2290.0px;top:547.4px;font-size:15.0px;color:#e6e6e6;">€</span>
<span class="t" id="t79" style="left:2195.3px;top:547.2px;font-size:15.0px;color:#e2e2e2;transform:scaleX(0.9920);">63,803.00</span>
<div style="left:341.6px;top:638.8px;width:2069.6px;height:1.8px;background:#eef2f7;"></div>
<svg style="left:393.8px;top:607.4px;" width="15.5" height="11.0" viewBox="0 0 15 11"><path d="M1.3 0.8 V4 Q1.3 5.6 3 5.6 H10" fill="none" stroke="#cbcbcb" stroke-width="2.3" stroke-linecap="round"/><path d="M9.2 1 L14.4 5.6 L9.2 10.2 z" fill="#cbcbcb"/></svg>
<span class="t" id="t80" style="left:421.3px;top:605.6px;font-size:15.5px;color:#c2c2c2;font-style:italic;transform:scaleX(0.9694);">One off project cost</span>
<div style="left:557.7px;top:605.9px;width:14.8px;height:14.8px;background:#dae6f1;border-radius:50%;"></div>
<div style="left:564.1px;top:611.9px;width:2.0px;height:5.4px;background:#f3f7fa;"></div>
<div style="left:564.0px;top:608.9px;width:2.2px;height:2.0px;background:#f3f7fa;border-radius:50%;"></div>
<svg style="left:779.0px;top:605.4px;" width="9.0" height="14.0" viewBox="0 0 9 14"><path d="M1.8 1.5 L7.2 7 L1.8 12.5" fill="none" stroke="#c6c6c6" stroke-width="1.8" stroke-linecap="round" stroke-linejoin="round"/></svg>
<div style="left:811.2px;top:590.7px;width:292.2px;height:40.8px;background:#fff;border:1.3px solid #eceef2;border-radius:4px;box-sizing:border-box;"></div>
<div style="left:1056.2px;top:591.7px;width:46.2px;height:38.8px;background:#f7f8fa;border-radius:0 3px 3px 0;"></div>
<span class="t" id="t81" style="left:1076.0px;top:603.5px;font-size:15.0px;color:#c9c9c9;">€</span>
<span class="t" id="t82" style="left:981.3px;top:603.3px;font-size:15.0px;color:#c4c4c4;transform:scaleX(0.9920);">37,200.00</span>
<div style="left:1114.7px;top:590.7px;width:292.2px;height:40.8px;background:#fff;border:1.3px solid #eceef2;border-radius:4px;box-sizing:border-box;"></div>
<div style="left:1359.7px;top:591.7px;width:46.2px;height:38.8px;background:#f7f8fa;border-radius:0 3px 3px 0;"></div>
<span class="t" id="t83" style="left:1379.5px;top:603.5px;font-size:15.0px;color:#c9c9c9;">€</span>
<span class="t" id="t84" style="left:1284.8px;top:603.3px;font-size:15.0px;color:#c4c4c4;transform:scaleX(0.9920);">34,230.00</span>
<div style="left:1418.2px;top:590.7px;width:292.2px;height:40.8px;background:#fff;border:1.3px solid #eceef2;border-radius:4px;box-sizing:border-box;"></div>
<div style="left:1663.2px;top:591.7px;width:46.2px;height:38.8px;background:#f7f8fa;border-radius:0 3px 3px 0;"></div>
<span class="t" id="t85" style="left:1683.0px;top:603.5px;font-size:15.0px;color:#c9c9c9;">€</span>
<span class="t" id="t86" style="left:1588.3px;top:603.3px;font-size:15.0px;color:#c4c4c4;transform:scaleX(0.9920);">35,428.00</span>
<div style="left:1721.7px;top:590.7px;width:292.2px;height:40.8px;background:#fff;border:1.3px solid #eceef2;border-radius:4px;box-sizing:border-box;"></div>
<div style="left:1966.7px;top:591.7px;width:46.2px;height:38.8px;background:#f7f8fa;border-radius:0 3px 3px 0;"></div>
<span class="t" id="t87" style="left:1986.5px;top:603.5px;font-size:15.0px;color:#c9c9c9;">€</span>
<span class="t" id="t88" style="left:1891.8px;top:603.3px;font-size:15.0px;color:#c4c4c4;transform:scaleX(0.9920);">22,346.00</span>
<div style="left:2025.2px;top:590.7px;width:292.2px;height:40.8px;background:#fff;border:1.3px solid #eceef2;border-radius:4px;box-sizing:border-box;"></div>
<div style="left:2270.2px;top:591.7px;width:46.2px;height:38.8px;background:#f7f8fa;border-radius:0 3px 3px 0;"></div>
<span class="t" id="t89" style="left:2290.0px;top:603.5px;font-size:15.0px;color:#c9c9c9;">€</span>
<span class="t" id="t90" style="left:2195.3px;top:603.3px;font-size:15.0px;color:#c4c4c4;transform:scaleX(0.9920);">37,695.00</span>
<div style="left:341.6px;top:694.9px;width:2069.6px;height:1.8px;background:#eef2f7;"></div>
<svg style="left:393.8px;top:663.5px;" width="15.5" height="11.0" viewBox="0 0 15 11"><path d="M1.3 0.8 V4 Q1.3 5.6 3 5.6 H10" fill="none" stroke="#cbcbcb" stroke-width="2.3" stroke-linecap="round"/><path d="M9.2 1 L14.4 5.6 L9.2 10.2 z" fill="#cbcbcb"/></svg>
<span class="t" id="t91" style="left:421.3px;top:661.7px;font-size:15.5px;color:#c2c2c2;font-style:italic;transform:scaleX(0.9684);">External management consulting assistance</span>
<div style="left:721.1px;top:662.1px;width:14.8px;height:14.8px;background:#dae6f1;border-radius:50%;"></div>
<div style="left:727.5px;top:668.1px;width:2.0px;height:5.4px;background:#f3f7fa;"></div>
<div style="left:727.4px;top:665.1px;width:2.2px;height:2.0px;background:#f3f7fa;border-radius:50%;"></div>
<svg style="left:742.5px;top:661.6px;" width="14.0" height="16.0" viewBox="0 0 14 16"><path d="M7 0 L14 2.6 V7.5 C14 11.5 11 14.6 7 16 C3 14.6 0 11.5 0 7.5 V2.6 z" fill="#c9c9c9"/><path d="M3.8 7.8 L6.2 10.2 L10.3 5.6" fill="none" stroke="#fff" stroke-width="1.5"/></svg>
<svg style="left:779.0px;top:661.5px;" width="9.0" height="14.0" viewBox="0 0 9 14"><path d="M1.8 1.5 L7.2 7 L1.8 12.5" fill="none" stroke="#c6c6c6" stroke-width="1.8" stroke-linecap="round" stroke-linejoin="round"/></svg>
<div style="left:811.2px;top:646.9px;width:292.2px;height:40.8px;background:#fff;border:1.3px solid #eceef2;border-radius:4px;box-sizing:border-box;"></div>
<div style="left:1056.2px;top:647.9px;width:46.2px;height:38.8px;background:#f7f8fa;border-radius:0 3px 3px 0;"></div>
<span class="t" id="t92" style="left:1076.0px;top:659.6px;font-size:15.0px;color:#c9c9c9;">€</span>
<span class="t" id="t93" style="left:981.3px;top:659.4px;font-size:15.0px;color:#c4c4c4;transform:scaleX(0.9920);">26,065.00</span>
<div style="left:1114.7px;top:646.9px;width:292.2px;height:40.8px;background:#fff;border:1.3px solid #eceef2;border-radius:4px;box-sizing:border-box;"></div>
<div style="left:1359.7px;top:647.9px;width:46.2px;height:38.8px;background:#f7f8fa;border-radius:0 3px 3px 0;"></div>
<span class="t" id="t94" style="left:1379.5px;top:659.6px;font-size:15.0px;color:#c9c9c9;">€</span>
<span class="t" id="t95" style="left:1284.8px;top:659.4px;font-size:15.0px;color:#c4c4c4;transform:scaleX(0.9920);">27,431.00</span>
<div style="left:1418.2px;top:646.9px;width:292.2px;height:40.8px;background:#fff;border:1.3px solid #eceef2;border-radius:4px;box-sizing:border-box;"></div>
<div style="left:1663.2px;top:647.9px;width:46.2px;height:38.8px;background:#f7f8fa;border-radius:0 3px 3px 0;"></div>
<span class="t" id="t96" style="left:1683.0px;top:659.6px;font-size:15.0px;color:#c9c9c9;">€</span>
<span class="t" id="t97" style="left:1588.3px;top:659.4px;font-size:15.0px;color:#c4c4c4;transform:scaleX(0.9920);">27,791.00</span>
<div style="left:1721.7px;top:646.9px;width:292.2px;height:40.8px;background:#fff;border:1.3px solid #eceef2;border-radius:4px;box-sizing:border-box;"></div>
<div style="left:1966.7px;top:647.9px;width:46.2px;height:38.8px;background:#f7f8fa;border-radius:0 3px 3px 0;"></div>
<span class="t" id="t98" style="left:1986.5px;top:659.6px;font-size:15.0px;color:#c9c9c9;">€</span>
<span class="t" id="t99" style="left:1891.8px;top:659.4px;font-size:15.0px;color:#c4c4c4;transform:scaleX(0.9920);">29,896.00</span>
<div style="left:2025.2px;top:646.9px;width:292.2px;height:40.8px;background:#fff;border:1.3px solid #eceef2;border-radius:4px;box-sizing:border-box;"></div>
<div style="left:2270.2px;top:647.9px;width:46.2px;height:38.8px;background:#f7f8fa;border-radius:0 3px 3px 0;"></div>
<span class="t" id="t100" style="left:2290.0px;top:659.6px;font-size:15.0px;color:#c9c9c9;">€</span>
<span class="t" id="t101" style="left:2195.3px;top:659.4px;font-size:15.0px;color:#c4c4c4;transform:scaleX(0.9920);">26,108.00</span>
<div style="left:341.6px;top:695.8px;width:2069.6px;height:56.1px;background:#fbfbfb;"></div>
<div style="left:341.6px;top:751.0px;width:2069.6px;height:1.8px;background:#eef2f7;"></div>
<div style="left:373.6px;top:714.0px;width:23.2px;height:21.6px;background:#fcfcfc;border:1.2px solid #ececec;border-radius:4px;box-sizing:border-box;"><div style="left:5.8px;top:4.6px;width:9px;height:10.4px;background:#dedede;border-radius:1.5px;"></div><div style="left:8px;top:6.6px;width:4.6px;height:6px;background:#e8e8e8;"></div></div>
<span class="t" id="t102" style="left:406.0px;top:716.8px;font-size:15.5px;color:#b4b4b4;font-weight:700;transform:scaleX(0.9671);">FTE Impact</span>
<div style="left:492.9px;top:717.4px;width:14.8px;height:14.8px;background:#dae6f1;border-radius:50%;"></div>
<div style="left:499.3px;top:723.4px;width:2.0px;height:5.4px;background:#f3f7fa;"></div>
<div style="left:499.2px;top:720.4px;width:2.2px;height:2.0px;background:#f3f7fa;border-radius:50%;"></div>
<svg style="left:779.0px;top:717.7px;" width="9.0" height="14.0" viewBox="0 0 9 14"><path d="M1.8 1.5 L7.2 7 L1.8 12.5" fill="none" stroke="#c6c6c6" stroke-width="1.8" stroke-linecap="round" stroke-linejoin="round"/></svg>
<div style="left:811.2px;top:703.0px;width:292.2px;height:40.8px;background:#fff;border:1.3px solid #f4f5f8;border-radius:4px;box-sizing:border-box;"></div>
<div style="left:1056.2px;top:704.0px;width:46.2px;height:38.8px;background:#fafbfc;border-radius:0 3px 3px 0;"></div>
<svg style="left:1070.0px;top:716.2px;" width="20.0" height="14.0" viewBox="0 0 20 14"><g fill="#e6e6e6"><circle cx="6.3" cy="4" r="3.2"/><path d="M0 14 v-2 c0-3 3-4.2 6.3-4.2 s6.3 1.2 6.3 4.2 v2 z"/><circle cx="14.2" cy="4" r="3"/><path d="M14 7.6 c3.2 0 6 1.2 6 4.2 v2.2 h-5.8 v-2.4 c0-1.7-0.8-3-2.2-3.7 c0.6-0.2 1.3-0.3 2-0.3 z"/></g></svg>
<span class="t" id="t103" style="left:1003.5px;top:715.5px;font-size:15.0px;color:#e2e2e2;transform:scaleX(1.0342);">-15.00</span>
<div style="left:1114.7px;top:703.0px;width:292.2px;height:40.8px;background:#fff;border:1.3px solid #f4f5f8;border-radius:4px;box-sizing:border-box;"></div>
<div style="left:1359.7px;top:704.0px;width:46.2px;height:38.8px;background:#fafbfc;border-radius:0 3px 3px 0;"></div>
<svg style="left:1373.5px;top:716.2px;" width="20.0" height="14.0" viewBox="0 0 20 14"><g fill="#e6e6e6"><circle cx="6.3" cy="4" r="3.2"/><path d="M0 14 v-2 c0-3 3-4.2 6.3-4.2 s6.3 1.2 6.3 4.2 v2 z"/><circle cx="14.2" cy="4" r="3"/><path d="M14 7.6 c3.2 0 6 1.2 6 4.2 v2.2 h-5.8 v-2.4 c0-1.7-0.8-3-2.2-3.7 c0.6-0.2 1.3-0.3 2-0.3 z"/></g></svg>
<span class="t" id="t104" style="left:1307.0px;top:715.5px;font-size:15.0px;color:#e2e2e2;transform:scaleX(1.0342);">-50.00</span>
<div style="left:1418.2px;top:703.0px;width:292.2px;height:40.8px;background:#fff;border:1.3px solid #f4f5f8;border-radius:4px;box-sizing:border-box;"></div>
<div style="left:1663.2px;top:704.0px;width:46.2px;height:38.8px;background:#fafbfc;border-radius:0 3px 3px 0;"></div>
<svg style="left:1677.0px;top:716.2px;" width="20.0" height="14.0" viewBox="0 0 20 14"><g fill="#e6e6e6"><circle cx="6.3" cy="4" r="3.2"/><path d="M0 14 v-2 c0-3 3-4.2 6.3-4.2 s6.3 1.2 6.3 4.2 v2 z"/><circle cx="14.2" cy="4" r="3"/><path d="M14 7.6 c3.2 0 6 1.2 6 4.2 v2.2 h-5.8 v-2.4 c0-1.7-0.8-3-2.2-3.7 c0.6-0.2 1.3-0.3 2-0.3 z"/></g></svg>
<span class="t" id="t105" style="left:1626.0px;top:715.5px;font-size:15.0px;color:#e2e2e2;transform:scaleX(0.9759);">8.00</span>
<div style="left:1721.7px;top:703.0px;width:292.2px;height:40.8px;background:#fff;border:1.3px solid #f4f5f8;border-radius:4px;box-sizing:border-box;"></div>
<div style="left:1966.7px;top:704.0px;width:46.2px;height:38.8px;background:#fafbfc;border-radius:0 3px 3px 0;"></div>
<svg style="left:1980.5px;top:716.2px;" width="20.0" height="14.0" viewBox="0 0 20 14"><g fill="#e6e6e6"><circle cx="6.3" cy="4" r="3.2"/><path d="M0 14 v-2 c0-3 3-4.2 6.3-4.2 s6.3 1.2 6.3 4.2 v2 z"/><circle cx="14.2" cy="4" r="3"/><path d="M14 7.6 c3.2 0 6 1.2 6 4.2 v2.2 h-5.8 v-2.4 c0-1.7-0.8-3-2.2-3.7 c0.6-0.2 1.3-0.3 2-0.3 z"/></g></svg>
<span class="t" id="t106" style="left:1929.5px;top:715.5px;font-size:15.0px;color:#e2e2e2;transform:scaleX(0.9759);">2.00</span>
<div style="left:2025.2px;top:703.0px;width:292.2px;height:40.8px;background:#fff;border:1.3px solid #f4f5f8;border-radius:4px;box-sizing:border-box;"></div>
<div style="left:2270.2px;top:704.0px;width:46.2px;height:38.8px;background:#fafbfc;border-radius:0 3px 3px 0;"></div>
<svg style="left:2284.0px;top:716.2px;" width="20.0" height="14.0" viewBox="0 0 20 14"><g fill="#e6e6e6"><circle cx="6.3" cy="4" r="3.2"/><path d="M0 14 v-2 c0-3 3-4.2 6.3-4.2 s6.3 1.2 6.3 4.2 v2 z"/><circle cx="14.2" cy="4" r="3"/><path d="M14 7.6 c3.2 0 6 1.2 6 4.2 v2.2 h-5.8 v-2.4 c0-1.7-0.8-3-2.2-3.7 c0.6-0.2 1.3-0.3 2-0.3 z"/></g></svg>
<span class="t" id="t107" style="left:2225.2px;top:715.5px;font-size:15.0px;color:#e2e2e2;transform:scaleX(1.0613);">-9.00</span>
<div style="left:341.6px;top:807.1px;width:2069.6px;height:1.8px;background:#eef2f7;"></div>
<svg style="left:393.8px;top:775.8px;" width="15.5" height="11.0" viewBox="0 0 15 11"><path d="M1.3 0.8 V4 Q1.3 5.6 3 5.6 H10" fill="none" stroke="#cbcbcb" stroke-width="2.3" stroke-linecap="round"/><path d="M9.2 1 L14.4 5.6 L9.2 10.2 z" fill="#cbcbcb"/></svg>
<span class="t" id="t108" style="left:421.3px;top:774.0px;font-size:15.5px;color:#c2c2c2;font-style:italic;transform:scaleX(0.9779);">Internal recurrent impact - Descrease</span>
<div style="left:677.6px;top:774.3px;width:14.8px;height:14.8px;background:#dae6f1;border-radius:50%;"></div>
<div style="left:684.0px;top:780.3px;width:2.0px;height:5.4px;background:#f3f7fa;"></div>
<div style="left:683.9px;top:777.3px;width:2.2px;height:2.0px;background:#f3f7fa;border-radius:50%;"></div>
<svg style="left:779.0px;top:773.8px;" width="9.0" height="14.0" viewBox="0 0 9 14"><path d="M1.8 1.5 L7.2 7 L1.8 12.5" fill="none" stroke="#c6c6c6" stroke-width="1.8" stroke-linecap="round" stroke-linejoin="round"/></svg>
<div style="left:811.2px;top:759.1px;width:292.2px;height:40.8px;background:#fff;border:1.3px solid #eceef2;border-radius:4px;box-sizing:border-box;"></div>
<div style="left:1056.2px;top:760.1px;width:46.2px;height:38.8px;background:#f7f8fa;border-radius:0 3px 3px 0;"></div>
<svg style="left:1070.0px;top:772.3px;" width="20.0" height="14.0" viewBox="0 0 20 14"><g fill="#c9c9c9"><circle cx="6.3" cy="4" r="3.2"/><path d="M0 14 v-2 c0-3 3-4.2 6.3-4.2 s6.3 1.2 6.3 4.2 v2 z"/><circle cx="14.2" cy="4" r="3"/><path d="M14 7.6 c3.2 0 6 1.2 6 4.2 v2.2 h-5.8 v-2.4 c0-1.7-0.8-3-2.2-3.7 c0.6-0.2 1.3-0.3 2-0.3 z"/></g></svg>
<span class="t" id="t109" style="left:1011.2px;top:771.7px;font-size:15.0px;color:#c4c4c4;transform:scaleX(0.9668);">55.00</span>
<div style="left:1114.7px;top:759.1px;width:292.2px;height:40.8px;background:#fff;border:1.3px solid #eceef2;border-radius:4px;box-sizing:border-box;"></div>
<div style="left:1359.7px;top:760.1px;width:46.2px;height:38.8px;background:#f7f8fa;border-radius:0 3px 3px 0;"></div>
<svg style="left:1373.5px;top:772.3px;" width="20.0" height="14.0" viewBox="0 0 20 14"><g fill="#c9c9c9"><circle cx="6.3" cy="4" r="3.2"/><path d="M0 14 v-2 c0-3 3-4.2 6.3-4.2 s6.3 1.2 6.3 4.2 v2 z"/><circle cx="14.2" cy="4" r="3"/><path d="M14 7.6 c3.2 0 6 1.2 6 4.2 v2.2 h-5.8 v-2.4 c0-1.7-0.8-3-2.2-3.7 c0.6-0.2 1.3-0.3 2-0.3 z"/></g></svg>
<span class="t" id="t110" style="left:1314.7px;top:771.7px;font-size:15.0px;color:#c4c4c4;transform:scaleX(0.9668);">70.00</span>
<div style="left:1418.2px;top:759.1px;width:292.2px;height:40.8px;background:#fff;border:1.3px solid #eceef2;border-radius:4px;box-sizing:border-box;"></div>
<div style="left:1663.2px;top:760.1px;width:46.2px;height:38.8px;background:#f7f8fa;border-radius:0 3px 3px 0;"></div>
<svg style="left:1677.0px;top:772.3px;" width="20.0" height="14.0" viewBox="0 0 20 14"><g fill="#c9c9c9"><circle cx="6.3" cy="4" r="3.2"/><path d="M0 14 v-2 c0-3 3-4.2 6.3-4.2 s6.3 1.2 6.3 4.2 v2 z"/><circle cx="14.2" cy="4" r="3"/><path d="M14 7.6 c3.2 0 6 1.2 6 4.2 v2.2 h-5.8 v-2.4 c0-1.7-0.8-3-2.2-3.7 c0.6-0.2 1.3-0.3 2-0.3 z"/></g></svg>
<span class="t" id="t111" style="left:1618.2px;top:771.7px;font-size:15.0px;color:#c4c4c4;transform:scaleX(0.9668);">46.00</span>
<div style="left:1721.7px;top:759.1px;width:292.2px;height:40.8px;background:#fff;border:1.3px solid #eceef2;border-radius:4px;box-sizing:border-box;"></div>
<div style="left:1966.7px;top:760.1px;width:46.2px;height:38.8px;background:#f7f8fa;border-radius:0 3px 3px 0;"></div>
<svg style="left:1980.5px;top:772.3px;" width="20.0" height="14.0" viewBox="0 0 20 14"><g fill="#c9c9c9"><circle cx="6.3" cy="4" r="3.2"/><path d="M0 14 v-2 c0-3 3-4.2 6.3-4.2 s6.3 1.2 6.3 4.2 v2 z"/><circle cx="14.2" cy="4" r="3"/><path d="M14 7.6 c3.2 0 6 1.2 6 4.2 v2.2 h-5.8 v-2.4 c0-1.7-0.8-3-2.2-3.7 c0.6-0.2 1.3-0.3 2-0.3 z"/></g></svg>
<span class="t" id="t112" style="left:1921.7px;top:771.7px;font-size:15.0px;color:#c4c4c4;transform:scaleX(0.9668);">42.00</span>
<div style="left:2025.2px;top:759.1px;width:292.2px;height:40.8px;background:#fff;border:1.3px solid #eceef2;border-radius:4px;box-sizing:border-box;"></div>
<div style="left:2270.2px;top:760.1px;width:46.2px;height:38.8px;background:#f7f8fa;border-radius:0 3px 3px 0;"></div>
<svg style="left:2284.0px;top:772.3px;" width="20.0" height="14.0" viewBox="0 0 20 14"><g fill="#c9c9c9"><circle cx="6.3" cy="4" r="3.2"/><path d="M0 14 v-2 c0-3 3-4.2 6.3-4.2 s6.3 1.2 6.3 4.2 v2 z"/><circle cx="14.2" cy="4" r="3"/><path d="M14 7.6 c3.2 0 6 1.2 6 4.2 v2.2 h-5.8 v-2.4 c0-1.7-0.8-3-2.2-3.7 c0.6-0.2 1.3-0.3 2-0.3 z"/></g></svg>
<span class="t" id="t113" style="left:2225.2px;top:771.7px;font-size:15.0px;color:#c4c4c4;transform:scaleX(0.9668);">40.00</span>
<div style="left:341.6px;top:863.2px;width:2069.6px;height:1.8px;background:#eef2f7;"></div>
<svg style="left:393.8px;top:831.9px;" width="15.5" height="11.0" viewBox="0 0 15 11"><path d="M1.3 0.8 V4 Q1.3 5.6 3 5.6 H10" fill="none" stroke="#cbcbcb" stroke-width="2.3" stroke-linecap="round"/><path d="M9.2 1 L14.4 5.6 L9.2 10.2 z" fill="#cbcbcb"/></svg>
<span class="t" id="t114" style="left:421.3px;top:830.1px;font-size:15.5px;color:#c2c2c2;font-style:italic;transform:scaleX(0.9867);">Internal recurrent impact - Increase</span>
<div style="left:665.4px;top:830.4px;width:14.8px;height:14.8px;background:#dae6f1;border-radius:50%;"></div>
<div style="left:671.8px;top:836.4px;width:2.0px;height:5.4px;background:#f3f7fa;"></div>
<div style="left:671.7px;top:833.4px;width:2.2px;height:2.0px;background:#f3f7fa;border-radius:50%;"></div>
<svg style="left:779.0px;top:829.9px;" width="9.0" height="14.0" viewBox="0 0 9 14"><path d="M1.8 1.5 L7.2 7 L1.8 12.5" fill="none" stroke="#c6c6c6" stroke-width="1.8" stroke-linecap="round" stroke-linejoin="round"/></svg>
<div style="left:811.2px;top:815.2px;width:292.2px;height:40.8px;background:#fff;border:1.3px solid #eceef2;border-radius:4px;box-sizing:border-box;"></div>
<div style="left:1056.2px;top:816.2px;width:46.2px;height:38.8px;background:#f7f8fa;border-radius:0 3px 3px 0;"></div>
<svg style="left:1070.0px;top:828.4px;" width="20.0" height="14.0" viewBox="0 0 20 14"><g fill="#c9c9c9"><circle cx="6.3" cy="4" r="3.2"/><path d="M0 14 v-2 c0-3 3-4.2 6.3-4.2 s6.3 1.2 6.3 4.2 v2 z"/><circle cx="14.2" cy="4" r="3"/><path d="M14 7.6 c3.2 0 6 1.2 6 4.2 v2.2 h-5.8 v-2.4 c0-1.7-0.8-3-2.2-3.7 c0.6-0.2 1.3-0.3 2-0.3 z"/></g></svg>
<span class="t" id="t115" style="left:1011.2px;top:827.8px;font-size:15.0px;color:#c4c4c4;transform:scaleX(0.9668);">40.00</span>
<div style="left:1114.7px;top:815.2px;width:292.2px;height:40.8px;background:#fff;border:1.3px solid #eceef2;border-radius:4px;box-sizing:border-box;"></div>
<div style="left:1359.7px;top:816.2px;width:46.2px;height:38.8px;background:#f7f8fa;border-radius:0 3px 3px 0;"></div>
<svg style="left:1373.5px;top:828.4px;" width="20.0" height="14.0" viewBox="0 0 20 14"><g fill="#c9c9c9"><circle cx="6.3" cy="4" r="3.2"/><path d="M0 14 v-2 c0-3 3-4.2 6.3-4.2 s6.3 1.2 6.3 4.2 v2 z"/><circle cx="14.2" cy="4" r="3"/><path d="M14 7.6 c3.2 0 6 1.2 6 4.2 v2.2 h-5.8 v-2.4 c0-1.7-0.8-3-2.2-3.7 c0.6-0.2 1.3-0.3 2-0.3 z"/></g></svg>
<span class="t" id="t116" style="left:1314.7px;top:827.8px;font-size:15.0px;color:#c4c4c4;transform:scaleX(0.9668);">20.00</span>
<div style="left:1418.2px;top:815.2px;width:292.2px;height:40.8px;background:#fff;border:1.3px solid #eceef2;border-radius:4px;box-sizing:border-box;"></div>
<div style="left:1663.2px;top:816.2px;width:46.2px;height:38.8px;background:#f7f8fa;border-radius:0 3px 3px 0;"></div>
<svg style="left:1677.0px;top:828.4px;" width="20.0" height="14.0" viewBox="0 0 20 14"><g fill="#c9c9c9"><circle cx="6.3" cy="4" r="3.2"/><path d="M0 14 v-2 c0-3 3-4.2 6.3-4.2 s6.3 1.2 6.3 4.2 v2 z"/><circle cx="14.2" cy="4" r="3"/><path d="M14 7.6 c3.2 0 6 1.2 6 4.2 v2.2 h-5.8 v-2.4 c0-1.7-0.8-3-2.2-3.7 c0.6-0.2 1.3-0.3 2-0.3 z"/></g></svg>
<span class="t" id="t117" style="left:1618.2px;top:827.8px;font-size:15.0px;color:#c4c4c4;transform:scaleX(0.9668);">54.00</span>
<div style="left:1721.7px;top:815.2px;width:292.2px;height:40.8px;background:#fff;border:1.3px solid #eceef2;border-radius:4px;box-sizing:border-box;"></div>
<div style="left:1966.7px;top:816.2px;width:46.2px;height:38.8px;background:#f7f8fa;border-radius:0 3px 3px 0;"></div>
<svg style="left:1980.5px;top:828.4px;" width="20.0" height="14.0" viewBox="0 0 20 14"><g fill="#c9c9c9"><circle cx="6.3" cy="4" r="3.2"/><path d="M0 14 v-2 c0-3 3-4.2 6.3-4.2 s6.3 1.2 6.3 4.2 v2 z"/><circle cx="14.2" cy="4" r="3"/><path d="M14 7.6 c3.2 0 6 1.2 6 4.2 v2.2 h-5.8 v-2.4 c0-1.7-0.8-3-2.2-3.7 c0.6-0.2 1.3-0.3 2-0.3 z"/></g></svg>
<span class="t" id="t118" style="left:1921.7px;top:827.8px;font-size:15.0px;color:#c4c4c4;transform:scaleX(0.9668);">44.00</span>
<div style="left:2025.2px;top:815.2px;width:292.2px;height:40.8px;background:#fff;border:1.3px solid #eceef2;border-radius:4px;box-sizing:border-box;"></div>
<div style="left:2270.2px;top:816.2px;width:46.2px;height:38.8px;background:#f7f8fa;border-radius:0 3px 3px 0;"></div>
<svg style="left:2284.0px;top:828.4px;" width="20.0" height="14.0" viewBox="0 0 20 14"><g fill="#c9c9c9"><circle cx="6.3" cy="4" r="3.2"/><path d="M0 14 v-2 c0-3 3-4.2 6.3-4.2 s6.3 1.2 6.3 4.2 v2 z"/><circle cx="14.2" cy="4" r="3"/><path d="M14 7.6 c3.2 0 6 1.2 6 4.2 v2.2 h-5.8 v-2.4 c0-1.7-0.8-3-2.2-3.7 c0.6-0.2 1.3-0.3 2-0.3 z"/></g></svg>
<span class="t" id="t119" style="left:2225.2px;top:827.8px;font-size:15.0px;color:#c4c4c4;transform:scaleX(0.9668);">31.00</span>
<div style="left:341.6px;top:864.1px;width:2069.6px;height:56.1px;background:#fbfbfb;"></div>
<div style="left:341.6px;top:919.4px;width:2069.6px;height:1.8px;background:#eef2f7;"></div>
<div style="left:373.6px;top:882.4px;width:23.2px;height:21.6px;background:#fcfcfc;border:1.2px solid #ececec;border-radius:4px;box-sizing:border-box;"><div style="left:5.8px;top:4.6px;width:9px;height:10.4px;background:#dedede;border-radius:1.5px;"></div><div style="left:8px;top:6.6px;width:4.6px;height:6px;background:#e8e8e8;"></div></div>
<span class="t" id="t120" style="left:406.0px;top:885.1px;font-size:15.5px;color:#b4b4b4;font-weight:700;transform:scaleX(1.0219);">P&amp;L input</span>
<div style="left:486.6px;top:885.8px;width:14.8px;height:14.8px;background:#dae6f1;border-radius:50%;"></div>
<div style="left:493.0px;top:891.8px;width:2.0px;height:5.4px;background:#f3f7fa;"></div>
<div style="left:492.9px;top:888.8px;width:2.2px;height:2.0px;background:#f3f7fa;border-radius:50%;"></div>
<svg style="left:779.0px;top:886.0px;" width="9.0" height="14.0" viewBox="0 0 9 14"><path d="M1.8 1.5 L7.2 7 L1.8 12.5" fill="none" stroke="#c6c6c6" stroke-width="1.8" stroke-linecap="round" stroke-linejoin="round"/></svg>
<div style="left:811.2px;top:871.4px;width:292.2px;height:40.8px;background:#fff;border:1.3px solid #f4f5f8;border-radius:4px;box-sizing:border-box;"></div>
<div style="left:1056.2px;top:872.4px;width:46.2px;height:38.8px;background:#fafbfc;border-radius:0 3px 3px 0;"></div>
<span class="t" id="t121" style="left:1076.0px;top:884.1px;font-size:15.0px;color:#e6e6e6;">€</span>
<div style="left:1114.7px;top:871.4px;width:292.2px;height:40.8px;background:#fff;border:1.3px solid #f4f5f8;border-radius:4px;box-sizing:border-box;"></div>
<div style="left:1359.7px;top:872.4px;width:46.2px;height:38.8px;background:#fafbfc;border-radius:0 3px 3px 0;"></div>
<span class="t" id="t122" style="left:1379.5px;top:884.1px;font-size:15.0px;color:#e6e6e6;">€</span>
<div style="left:1418.2px;top:871.4px;width:292.2px;height:40.8px;background:#fff;border:1.3px solid #f4f5f8;border-radius:4px;box-sizing:border-box;"></div>
<div style="left:1663.2px;top:872.4px;width:46.2px;height:38.8px;background:#fafbfc;border-radius:0 3px 3px 0;"></div>
<span class="t" id="t123" style="left:1683.0px;top:884.1px;font-size:15.0px;color:#e6e6e6;">€</span>
<div style="left:1721.7px;top:871.4px;width:292.2px;height:40.8px;background:#fff;border:1.3px solid #f4f5f8;border-radius:4px;box-sizing:border-box;"></div>
<div style="left:1966.7px;top:872.4px;width:46.2px;height:38.8px;background:#fafbfc;border-radius:0 3px 3px 0;"></div>
<span class="t" id="t124" style="left:1986.5px;top:884.1px;font-size:15.0px;color:#e6e6e6;">€</span>
<div style="left:2025.2px;top:871.4px;width:292.2px;height:40.8px;background:#fff;border:1.3px solid #f4f5f8;border-radius:4px;box-sizing:border-box;"></div>
<div style="left:2270.2px;top:872.4px;width:46.2px;height:38.8px;background:#fafbfc;border-radius:0 3px 3px 0;"></div>
<span class="t" id="t125" style="left:2290.0px;top:884.1px;font-size:15.0px;color:#e6e6e6;">€</span>
<div style="left:341.6px;top:975.5px;width:2069.6px;height:1.8px;background:#eef2f7;"></div>
<svg style="left:393.8px;top:944.2px;" width="15.5" height="11.0" viewBox="0 0 15 11"><path d="M1.3 0.8 V4 Q1.3 5.6 3 5.6 H10" fill="none" stroke="#cbcbcb" stroke-width="2.3" stroke-linecap="round"/><path d="M9.2 1 L14.4 5.6 L9.2 10.2 z" fill="#cbcbcb"/></svg>
<span class="t" id="t126" style="left:421.3px;top:942.4px;font-size:15.5px;color:#c2c2c2;transform:scaleX(0.9504);">Total Revenues (7x)</span>
<div style="left:558.4px;top:942.7px;width:14.8px;height:14.8px;background:#dae6f1;border-radius:50%;"></div>
<div style="left:564.8px;top:948.7px;width:2.0px;height:5.4px;background:#f3f7fa;"></div>
<div style="left:564.7px;top:945.7px;width:2.2px;height:2.0px;background:#f3f7fa;border-radius:50%;"></div>
<svg style="left:779.0px;top:942.2px;" width="9.0" height="14.0" viewBox="0 0 9 14"><path d="M1.8 1.5 L7.2 7 L1.8 12.5" fill="none" stroke="#c6c6c6" stroke-width="1.8" stroke-linecap="round" stroke-linejoin="round"/></svg>
<div style="left:811.2px;top:927.5px;width:292.2px;height:40.8px;background:#fff;border:1.3px solid #eceef2;border-radius:4px;box-sizing:border-box;"></div>
<div style="left:1056.2px;top:928.5px;width:46.2px;height:38.8px;background:#f7f8fa;border-radius:0 3px 3px 0;"></div>
<span class="t" id="t127" style="left:1076.0px;top:940.2px;font-size:15.0px;color:#c9c9c9;">€</span>
<div style="left:1114.7px;top:927.5px;width:292.2px;height:40.8px;background:#fff;border:1.3px solid #eceef2;border-radius:4px;box-sizing:border-box;"></div>
<div style="left:1359.7px;top:928.5px;width:46.2px;height:38.8px;background:#f7f8fa;border-radius:0 3px 3px 0;"></div>
<span class="t" id="t128" style="left:1379.5px;top:940.2px;font-size:15.0px;color:#c9c9c9;">€</span>
<div style="left:1418.2px;top:927.5px;width:292.2px;height:40.8px;background:#fff;border:1.3px solid #eceef2;border-radius:4px;box-sizing:border-box;"></div>
<div style="left:1663.2px;top:928.5px;width:46.2px;height:38.8px;background:#f7f8fa;border-radius:0 3px 3px 0;"></div>
<span class="t" id="t129" style="left:1683.0px;top:940.2px;font-size:15.0px;color:#c9c9c9;">€</span>
<div style="left:1721.7px;top:927.5px;width:292.2px;height:40.8px;background:#fff;border:1.3px solid #eceef2;border-radius:4px;box-sizing:border-box;"></div>
<div style="left:1966.7px;top:928.5px;width:46.2px;height:38.8px;background:#f7f8fa;border-radius:0 3px 3px 0;"></div>
<span class="t" id="t130" style="left:1986.5px;top:940.2px;font-size:15.0px;color:#c9c9c9;">€</span>
<div style="left:2025.2px;top:927.5px;width:292.2px;height:40.8px;background:#fff;border:1.3px solid #eceef2;border-radius:4px;box-sizing:border-box;"></div>
<div style="left:2270.2px;top:928.5px;width:46.2px;height:38.8px;background:#f7f8fa;border-radius:0 3px 3px 0;"></div>
<span class="t" id="t131" style="left:2290.0px;top:940.2px;font-size:15.0px;color:#c9c9c9;">€</span>
<div style="left:341.6px;top:1031.6px;width:2069.6px;height:1.8px;background:#eef2f7;"></div>
<svg style="left:393.8px;top:1000.3px;" width="15.5" height="11.0" viewBox="0 0 15 11"><path d="M1.3 0.8 V4 Q1.3 5.6 3 5.6 H10" fill="none" stroke="#cbcbcb" stroke-width="2.3" stroke-linecap="round"/><path d="M9.2 1 L14.4 5.6 L9.2 10.2 z" fill="#cbcbcb"/></svg>
<span class="t" id="t132" style="left:421.3px;top:998.5px;font-size:15.5px;color:#c2c2c2;transform:scaleX(0.9722);">- Operating Costs, COGS (61/62x)</span>
<div style="left:657.7px;top:998.8px;width:14.8px;height:14.8px;background:#dae6f1;border-radius:50%;"></div>
<div style="left:664.1px;top:1004.8px;width:2.0px;height:5.4px;background:#f3f7fa;"></div>
<div style="left:664.0px;top:1001.8px;width:2.2px;height:2.0px;background:#f3f7fa;border-radius:50%;"></div>
<svg style="left:779.0px;top:998.3px;" width="9.0" height="14.0" viewBox="0 0 9 14"><path d="M1.8 1.5 L7.2 7 L1.8 12.5" fill="none" stroke="#c6c6c6" stroke-width="1.8" stroke-linecap="round" stroke-linejoin="round"/></svg>
<div style="left:811.2px;top:983.6px;width:292.2px;height:40.8px;background:#fff;border:1.3px solid #eceef2;border-radius:4px;box-sizing:border-box;"></div>
<div style="left:1056.2px;top:984.6px;width:46.2px;height:38.8px;background:#f7f8fa;border-radius:0 3px 3px 0;"></div>
<span class="t" id="t133" style="left:1076.0px;top:996.4px;font-size:15.0px;color:#c9c9c9;">€</span>
<div style="left:1114.7px;top:983.6px;width:292.2px;height:40.8px;background:#fff;border:1.3px solid #eceef2;border-radius:4px;box-sizing:border-box;"></div>
<div style="left:1359.7px;top:984.6px;width:46.2px;height:38.8px;background:#f7f8fa;border-radius:0 3px 3px 0;"></div>
<span class="t" id="t134" style="left:1379.5px;top:996.4px;font-size:15.0px;color:#c9c9c9;">€</span>
<div style="left:1418.2px;top:983.6px;width:292.2px;height:40.8px;background:#fff;border:1.3px solid #eceef2;border-radius:4px;box-sizing:border-box;"></div>
<div style="left:1663.2px;top:984.6px;width:46.2px;height:38.8px;background:#f7f8fa;border-radius:0 3px 3px 0;"></div>
<span class="t" id="t135" style="left:1683.0px;top:996.4px;font-size:15.0px;color:#c9c9c9;">€</span>
<div style="left:1721.7px;top:983.6px;width:292.2px;height:40.8px;background:#fff;border:1.3px solid #eceef2;border-radius:4px;box-sizing:border-box;"></div>
<div style="left:1966.7px;top:984.6px;width:46.2px;height:38.8px;background:#f7f8fa;border-radius:0 3px 3px 0;"></div>
<span class="t" id="t136" style="left:1986.5px;top:996.4px;font-size:15.0px;color:#c9c9c9;">€</span>
<div style="left:2025.2px;top:983.6px;width:292.2px;height:40.8px;background:#fff;border:1.3px solid #eceef2;border-radius:4px;box-sizing:border-box;"></div>
<div style="left:2270.2px;top:984.6px;width:46.2px;height:38.8px;background:#f7f8fa;border-radius:0 3px 3px 0;"></div>
<span class="t" id="t137" style="left:2290.0px;top:996.4px;font-size:15.0px;color:#c9c9c9;">€</span>
<div style="left:341.6px;top:1087.8px;width:2069.6px;height:1.8px;background:#eef2f7;"></div>
<div style="left:373.6px;top:1050.7px;width:23.2px;height:21.6px;background:#fcfcfc;border:1.2px solid #ececec;border-radius:4px;box-sizing:border-box;"><div style="left:5.8px;top:4.6px;width:9px;height:10.4px;background:#dedede;border-radius:1.5px;"></div><div style="left:8px;top:6.6px;width:4.6px;height:6px;background:#e8e8e8;"></div></div>
<svg style="left:420.6px;top:1055.4px;" width="15.5" height="11.0" viewBox="0 0 15 11"><path d="M1.3 0.8 V4 Q1.3 5.6 3 5.6 H10" fill="none" stroke="#cbcbcb" stroke-width="2.3" stroke-linecap="round"/><path d="M9.2 1 L14.4 5.6 L9.2 10.2 z" fill="#cbcbcb"/></svg>
<span class="t" id="t138" style="left:449.5px;top:1053.9px;font-size:14.5px;color:#c2c2c2;font-style:italic;transform:scaleX(0.9403);">= GROSS REVENUE</span>
<div style="left:586.3px;top:1054.9px;width:14.8px;height:14.8px;background:#dae6f1;border-radius:50%;"></div>
<div style="left:592.7px;top:1060.9px;width:2.0px;height:5.4px;background:#f3f7fa;"></div>
<div style="left:592.6px;top:1057.9px;width:2.2px;height:2.0px;background:#f3f7fa;border-radius:50%;"></div>
<svg style="left:779.0px;top:1054.4px;" width="9.0" height="14.0" viewBox="0 0 9 14"><path d="M1.8 1.5 L7.2 7 L1.8 12.5" fill="none" stroke="#c6c6c6" stroke-width="1.8" stroke-linecap="round" stroke-linejoin="round"/></svg>
<div style="left:811.2px;top:1039.7px;width:292.2px;height:40.8px;background:#fff;border:1.3px solid #f4f5f8;border-radius:4px;box-sizing:border-box;"></div>
<div style="left:1056.2px;top:1040.7px;width:46.2px;height:38.8px;background:#fafbfc;border-radius:0 3px 3px 0;"></div>
<span class="t" id="t139" style="left:1076.0px;top:1052.5px;font-size:15.0px;color:#e6e6e6;">€</span>
<span class="t" id="t140" style="left:1019.0px;top:1052.3px;font-size:15.0px;color:#e2e2e2;transform:scaleX(0.9759);">0.00</span>
<div style="left:1114.7px;top:1039.7px;width:292.2px;height:40.8px;background:#fff;border:1.3px solid #f4f5f8;border-radius:4px;box-sizing:border-box;"></div>
<div style="left:1359.7px;top:1040.7px;width:46.2px;height:38.8px;background:#fafbfc;border-radius:0 3px 3px 0;"></div>
<span class="t" id="t141" style="left:1379.5px;top:1052.5px;font-size:15.0px;color:#e6e6e6;">€</span>
<span class="t" id="t142" style="left:1322.5px;top:1052.3px;font-size:15.0px;color:#e2e2e2;transform:scaleX(0.9759);">0.00</span>
<div style="left:1418.2px;top:1039.7px;width:292.2px;height:40.8px;background:#fff;border:1.3px solid #f4f5f8;border-radius:4px;box-sizing:border-box;"></div>
<div style="left:1663.2px;top:1040.7px;width:46.2px;height:38.8px;background:#fafbfc;border-radius:0 3px 3px 0;"></div>
<span class="t" id="t143" style="left:1683.0px;top:1052.5px;font-size:15.0px;color:#e6e6e6;">€</span>
<span class="t" id="t144" style="left:1626.0px;top:1052.3px;font-size:15.0px;color:#e2e2e2;transform:scaleX(0.9759);">0.00</span>
<div style="left:1721.7px;top:1039.7px;width:292.2px;height:40.8px;background:#fff;border:1.3px solid #f4f5f8;border-radius:4px;box-sizing:border-box;"></div>
<div style="left:1966.7px;top:1040.7px;width:46.2px;height:38.8px;background:#fafbfc;border-radius:0 3px 3px 0;"></div>
<span class="t" id="t145" style="left:1986.5px;top:1052.5px;font-size:15.0px;color:#e6e6e6;">€</span>
<span class="t" id="t146" style="left:1929.5px;top:1052.3px;font-size:15.0px;color:#e2e2e2;transform:scaleX(0.9759);">0.00</span>
<div style="left:2025.2px;top:1039.7px;width:292.2px;height:40.8px;background:#fff;border:1.3px solid #f4f5f8;border-radius:4px;box-sizing:border-box;"></div>
<div style="left:2270.2px;top:1040.7px;width:46.2px;height:38.8px;background:#fafbfc;border-radius:0 3px 3px 0;"></div>
<span class="t" id="t147" style="left:2290.0px;top:1052.5px;font-size:15.0px;color:#e6e6e6;">€</span>
<span class="t" id="t148" style="left:2233.0px;top:1052.3px;font-size:15.0px;color:#e2e2e2;transform:scaleX(0.9759);">0.00</span>
<div style="left:341.6px;top:1143.9px;width:2069.6px;height:1.8px;background:#eef2f7;"></div>
<svg style="left:393.8px;top:1112.5px;" width="15.5" height="11.0" viewBox="0 0 15 11"><path d="M1.3 0.8 V4 Q1.3 5.6 3 5.6 H10" fill="none" stroke="#cbcbcb" stroke-width="2.3" stroke-linecap="round"/><path d="M9.2 1 L14.4 5.6 L9.2 10.2 z" fill="#cbcbcb"/></svg>
<span class="t" id="t149" style="left:421.3px;top:1110.7px;font-size:15.5px;color:#c2c2c2;transform:scaleX(0.9750);">- Operating Expenses, OpEx (61/62x)</span>
<div style="left:679.4px;top:1111.0px;width:14.8px;height:14.8px;background:#dae6f1;border-radius:50%;"></div>
<div style="left:685.8px;top:1117.0px;width:2.0px;height:5.4px;background:#f3f7fa;"></div>
<div style="left:685.7px;top:1114.0px;width:2.2px;height:2.0px;background:#f3f7fa;border-radius:50%;"></div>
<svg style="left:779.0px;top:1110.5px;" width="9.0" height="14.0" viewBox="0 0 9 14"><path d="M1.8 1.5 L7.2 7 L1.8 12.5" fill="none" stroke="#c6c6c6" stroke-width="1.8" stroke-linecap="round" stroke-linejoin="round"/></svg>
<div style="left:811.2px;top:1095.8px;width:292.2px;height:40.8px;background:#fff;border:1.3px solid #eceef2;border-radius:4px;box-sizing:border-box;"></div>
<div style="left:1056.2px;top:1096.8px;width:46.2px;height:38.8px;background:#f7f8fa;border-radius:0 3px 3px 0;"></div>
<span class="t" id="t150" style="left:1076.0px;top:1108.6px;font-size:15.0px;color:#c9c9c9;">€</span>
<div style="left:1114.7px;top:1095.8px;width:292.2px;height:40.8px;background:#fff;border:1.3px solid #eceef2;border-radius:4px;box-sizing:border-box;"></div>
<div style="left:1359.7px;top:1096.8px;width:46.2px;height:38.8px;background:#f7f8fa;border-radius:0 3px 3px 0;"></div>
<span class="t" id="t151" style="left:1379.5px;top:1108.6px;font-size:15.0px;color:#c9c9c9;">€</span>
<div style="left:1418.2px;top:1095.8px;width:292.2px;height:40.8px;background:#fff;border:1.3px solid #eceef2;border-radius:4px;box-sizing:border-box;"></div>
<div style="left:1663.2px;top:1096.8px;width:46.2px;height:38.8px;background:#f7f8fa;border-radius:0 3px 3px 0;"></div>
<span class="t" id="t152" style="left:1683.0px;top:1108.6px;font-size:15.0px;color:#c9c9c9;">€</span>
<div style="left:1721.7px;top:1095.8px;width:292.2px;height:40.8px;background:#fff;border:1.3px solid #eceef2;border-radius:4px;box-sizing:border-box;"></div>
<div style="left:1966.7px;top:1096.8px;width:46.2px;height:38.8px;background:#f7f8fa;border-radius:0 3px 3px 0;"></div>
<span class="t" id="t153" style="left:1986.5px;top:1108.6px;font-size:15.0px;color:#c9c9c9;">€</span>
<div style="left:2025.2px;top:1095.8px;width:292.2px;height:40.8px;background:#fff;border:1.3px solid #eceef2;border-radius:4px;box-sizing:border-box;"></div>
<div style="left:2270.2px;top:1096.8px;width:46.2px;height:38.8px;background:#f7f8fa;border-radius:0 3px 3px 0;"></div>
<span class="t" id="t154" style="left:2290.0px;top:1108.6px;font-size:15.0px;color:#c9c9c9;">€</span>
<div style="left:341.6px;top:1200.0px;width:2069.6px;height:1.8px;background:#eef2f7;"></div>
<div style="left:373.6px;top:1163.0px;width:23.2px;height:21.6px;background:#fcfcfc;border:1.2px solid #ececec;border-radius:4px;box-sizing:border-box;"><div style="left:5.8px;top:4.6px;width:9px;height:10.4px;background:#dedede;border-radius:1.5px;"></div><div style="left:8px;top:6.6px;width:4.6px;height:6px;background:#e8e8e8;"></div></div>
<svg style="left:420.6px;top:1167.7px;" width="15.5" height="11.0" viewBox="0 0 15 11"><path d="M1.3 0.8 V4 Q1.3 5.6 3 5.6 H10" fill="none" stroke="#cbcbcb" stroke-width="2.3" stroke-linecap="round"/><path d="M9.2 1 L14.4 5.6 L9.2 10.2 z" fill="#cbcbcb"/></svg>
<span class="t" id="t155" style="left:449.5px;top:1166.2px;font-size:14.5px;color:#c2c2c2;font-style:italic;transform:scaleX(0.9865);">= EBITDA</span>
<div style="left:519.6px;top:1167.2px;width:14.8px;height:14.8px;background:#dae6f1;border-radius:50%;"></div>
<div style="left:526.0px;top:1173.2px;width:2.0px;height:5.4px;background:#f3f7fa;"></div>
<div style="left:525.9px;top:1170.2px;width:2.2px;height:2.0px;background:#f3f7fa;border-radius:50%;"></div>
<svg style="left:779.0px;top:1166.7px;" width="9.0" height="14.0" viewBox="0 0 9 14"><path d="M1.8 1.5 L7.2 7 L1.8 12.5" fill="none" stroke="#c6c6c6" stroke-width="1.8" stroke-linecap="round" stroke-linejoin="round"/></svg>
<div style="left:811.2px;top:1152.0px;width:292.2px;height:40.8px;background:#fff;border:1.3px solid #f4f5f8;border-radius:4px;box-sizing:border-box;"></div>
<div style="left:1056.2px;top:1153.0px;width:46.2px;height:38.8px;background:#fafbfc;border-radius:0 3px 3px 0;"></div>
<span class="t" id="t156" style="left:1076.0px;top:1164.7px;font-size:15.0px;color:#e6e6e6;">€</span>
<span class="t" id="t157" style="left:1019.0px;top:1164.5px;font-size:15.0px;color:#e2e2e2;transform:scaleX(0.9759);">0.00</span>
<div style="left:1114.7px;top:1152.0px;width:292.2px;height:40.8px;background:#fff;border:1.3px solid #f4f5f8;border-radius:4px;box-sizing:border-box;"></div>
<div style="left:1359.7px;top:1153.0px;width:46.2px;height:38.8px;background:#fafbfc;border-radius:0 3px 3px 0;"></div>
<span class="t" id="t158" style="left:1379.5px;top:1164.7px;font-size:15.0px;color:#e6e6e6;">€</span>
<span class="t" id="t159" style="left:1322.5px;top:1164.5px;font-size:15.0px;color:#e2e2e2;transform:scaleX(0.9759);">0.00</span>
<div style="left:1418.2px;top:1152.0px;width:292.2px;height:40.8px;background:#fff;border:1.3px solid #f4f5f8;border-radius:4px;box-sizing:border-box;"></div>
<div style="left:1663.2px;top:1153.0px;width:46.2px;height:38.8px;background:#fafbfc;border-radius:0 3px 3px 0;"></div>
<span class="t" id="t160" style="left:1683.0px;top:1164.7px;font-size:15.0px;color:#e6e6e6;">€</span>
<span class="t" id="t161" style="left:1626.0px;top:1164.5px;font-size:15.0px;color:#e2e2e2;transform:scaleX(0.9759);">0.00</span>
<div style="left:1721.7px;top:1152.0px;width:292.2px;height:40.8px;background:#fff;border:1.3px solid #f4f5f8;border-radius:4px;box-sizing:border-box;"></div>
<div style="left:1966.7px;top:1153.0px;width:46.2px;height:38.8px;background:#fafbfc;border-radius:0 3px 3px 0;"></div>
<span class="t" id="t162" style="left:1986.5px;top:1164.7px;font-size:15.0px;color:#e6e6e6;">€</span>
<span class="t" id="t163" style="left:1929.5px;top:1164.5px;font-size:15.0px;color:#e2e2e2;transform:scaleX(0.9759);">0.00</span>
<div style="left:2025.2px;top:1152.0px;width:292.2px;height:40.8px;background:#fff;border:1.3px solid #f4f5f8;border-radius:4px;box-sizing:border-box;"></div>
<div style="left:2270.2px;top:1153.0px;width:46.2px;height:38.8px;background:#fafbfc;border-radius:0 3px 3px 0;"></div>
<span class="t" id="t164" style="left:2290.0px;top:1164.7px;font-size:15.0px;color:#e6e6e6;">€</span>
<span class="t" id="t165" style="left:2233.0px;top:1164.5px;font-size:15.0px;color:#e2e2e2;transform:scaleX(0.9759);">0.00</span>
<div style="left:341.6px;top:1256.1px;width:2069.6px;height:1.8px;background:#eef2f7;"></div>
<svg style="left:393.8px;top:1224.8px;" width="15.5" height="11.0" viewBox="0 0 15 11"><path d="M1.3 0.8 V4 Q1.3 5.6 3 5.6 H10" fill="none" stroke="#cbcbcb" stroke-width="2.3" stroke-linecap="round"/><path d="M9.2 1 L14.4 5.6 L9.2 10.2 z" fill="#cbcbcb"/></svg>
<span class="t" id="t166" style="left:421.3px;top:1223.0px;font-size:15.5px;color:#c2c2c2;transform:scaleX(1.0225);">- Depreciations &amp; Amortization (64x)</span>
<div style="left:681.1px;top:1223.3px;width:14.8px;height:14.8px;background:#dae6f1;border-radius:50%;"></div>
<div style="left:687.5px;top:1229.3px;width:2.0px;height:5.4px;background:#f3f7fa;"></div>
<div style="left:687.4px;top:1226.3px;width:2.2px;height:2.0px;background:#f3f7fa;border-radius:50%;"></div>
<svg style="left:779.0px;top:1222.8px;" width="9.0" height="14.0" viewBox="0 0 9 14"><path d="M1.8 1.5 L7.2 7 L1.8 12.5" fill="none" stroke="#c6c6c6" stroke-width="1.8" stroke-linecap="round" stroke-linejoin="round"/></svg>
<div style="left:811.2px;top:1208.1px;width:292.2px;height:40.8px;background:#fff;border:1.3px solid #eceef2;border-radius:4px;box-sizing:border-box;"></div>
<div style="left:1056.2px;top:1209.1px;width:46.2px;height:38.8px;background:#f7f8fa;border-radius:0 3px 3px 0;"></div>
<span class="t" id="t167" style="left:1076.0px;top:1220.9px;font-size:15.0px;color:#c9c9c9;">€</span>
<div style="left:1114.7px;top:1208.1px;width:292.2px;height:40.8px;background:#fff;border:1.3px solid #eceef2;border-radius:4px;box-sizing:border-box;"></div>
<div style="left:1359.7px;top:1209.1px;width:46.2px;height:38.8px;background:#f7f8fa;border-radius:0 3px 3px 0;"></div>
<span class="t" id="t168" style="left:1379.5px;top:1220.9px;font-size:15.0px;color:#c9c9c9;">€</span>
<div style="left:1418.2px;top:1208.1px;width:292.2px;height:40.8px;background:#fff;border:1.3px solid #eceef2;border-radius:4px;box-sizing:border-box;"></div>
<div style="left:1663.2px;top:1209.1px;width:46.2px;height:38.8px;background:#f7f8fa;border-radius:0 3px 3px 0;"></div>
<span class="t" id="t169" style="left:1683.0px;top:1220.9px;font-size:15.0px;color:#c9c9c9;">€</span>
<div style="left:1721.7px;top:1208.1px;width:292.2px;height:40.8px;background:#fff;border:1.3px solid #eceef2;border-radius:4px;box-sizing:border-box;"></div>
<div style="left:1966.7px;top:1209.1px;width:46.2px;height:38.8px;background:#f7f8fa;border-radius:0 3px 3px 0;"></div>
<span class="t" id="t170" style="left:1986.5px;top:1220.9px;font-size:15.0px;color:#c9c9c9;">€</span>
<div style="left:2025.2px;top:1208.1px;width:292.2px;height:40.8px;background:#fff;border:1.3px solid #eceef2;border-radius:4px;box-sizing:border-box;"></div>
<div style="left:2270.2px;top:1209.1px;width:46.2px;height:38.8px;background:#f7f8fa;border-radius:0 3px 3px 0;"></div>
<span class="t" id="t171" style="left:2290.0px;top:1220.9px;font-size:15.0px;color:#c9c9c9;">€</span>
<div style="left:341.6px;top:1312.2px;width:2069.6px;height:1.8px;background:#eef2f7;"></div>
<div style="left:373.6px;top:1275.2px;width:23.2px;height:21.6px;background:#fcfcfc;border:1.2px solid #ececec;border-radius:4px;box-sizing:border-box;"><div style="left:5.8px;top:4.6px;width:9px;height:10.4px;background:#dedede;border-radius:1.5px;"></div><div style="left:8px;top:6.6px;width:4.6px;height:6px;background:#e8e8e8;"></div></div>
<svg style="left:420.6px;top:1279.9px;" width="15.5" height="11.0" viewBox="0 0 15 11"><path d="M1.3 0.8 V4 Q1.3 5.6 3 5.6 H10" fill="none" stroke="#cbcbcb" stroke-width="2.3" stroke-linecap="round"/><path d="M9.2 1 L14.4 5.6 L9.2 10.2 z" fill="#cbcbcb"/></svg>
<span class="t" id="t172" style="left:449.5px;top:1278.4px;font-size:14.5px;color:#c2c2c2;font-style:italic;transform:scaleX(0.9612);">= EBIT</span>
<div style="left:498.6px;top:1279.4px;width:14.8px;height:14.8px;background:#dae6f1;border-radius:50%;"></div>
<div style="left:505.0px;top:1285.4px;width:2.0px;height:5.4px;background:#f3f7fa;"></div>
<div style="left:504.9px;top:1282.4px;width:2.2px;height:2.0px;background:#f3f7fa;border-radius:50%;"></div>
<svg style="left:779.0px;top:1278.9px;" width="9.0" height="14.0" viewBox="0 0 9 14"><path d="M1.8 1.5 L7.2 7 L1.8 12.5" fill="none" stroke="#c6c6c6" stroke-width="1.8" stroke-linecap="round" stroke-linejoin="round"/></svg>
<div style="left:811.2px;top:1264.2px;width:292.2px;height:40.8px;background:#fff;border:1.3px solid #f4f5f8;border-radius:4px;box-sizing:border-box;"></div>
<div style="left:1056.2px;top:1265.2px;width:46.2px;height:38.8px;background:#fafbfc;border-radius:0 3px 3px 0;"></div>
<span class="t" id="t173" style="left:1076.0px;top:1277.0px;font-size:15.0px;color:#e6e6e6;">€</span>
<span class="t" id="t174" style="left:1019.0px;top:1276.8px;font-size:15.0px;color:#e2e2e2;transform:scaleX(0.9759);">0.00</span>
<div style="left:1114.7px;top:1264.2px;width:292.2px;height:40.8px;background:#fff;border:1.3px solid #f4f5f8;border-radius:4px;box-sizing:border-box;"></div>
<div style="left:1359.7px;top:1265.2px;width:46.2px;height:38.8px;background:#fafbfc;border-radius:0 3px 3px 0;"></div>
<span class="t" id="t175" style="left:1379.5px;top:1277.0px;font-size:15.0px;color:#e6e6e6;">€</span>
<span class="t" id="t176" style="left:1322.5px;top:1276.8px;font-size:15.0px;color:#e2e2e2;transform:scaleX(0.9759);">0.00</span>
<div style="left:1418.2px;top:1264.2px;width:292.2px;height:40.8px;background:#fff;border:1.3px solid #f4f5f8;border-radius:4px;box-sizing:border-box;"></div>
<div style="left:1663.2px;top:1265.2px;width:46.2px;height:38.8px;background:#fafbfc;border-radius:0 3px 3px 0;"></div>
<span class="t" id="t177" style="left:1683.0px;top:1277.0px;font-size:15.0px;color:#e6e6e6;">€</span>
<span class="t" id="t178" style="left:1626.0px;top:1276.8px;font-size:15.0px;color:#e2e2e2;transform:scaleX(0.9759);">0.00</span>
<div style="left:1721.7px;top:1264.2px;width:292.2px;height:40.8px;background:#fff;border:1.3px solid #f4f5f8;border-radius:4px;box-sizing:border-box;"></div>
<div style="left:1966.7px;top:1265.2px;width:46.2px;height:38.8px;background:#fafbfc;border-radius:0 3px 3px 0;"></div>
<span class="t" id="t179" style="left:1986.5px;top:1277.0px;font-size:15.0px;color:#e6e6e6;">€</span>
<span class="t" id="t180" style="left:1929.5px;top:1276.8px;font-size:15.0px;color:#e2e2e2;transform:scaleX(0.9759);">0.00</span>
<div style="left:2025.2px;top:1264.2px;width:292.2px;height:40.8px;background:#fff;border:1.3px solid #f4f5f8;border-radius:4px;box-sizing:border-box;"></div>
<div style="left:2270.2px;top:1265.2px;width:46.2px;height:38.8px;background:#fafbfc;border-radius:0 3px 3px 0;"></div>
<span class="t" id="t181" style="left:2290.0px;top:1277.0px;font-size:15.0px;color:#e6e6e6;">€</span>
<span class="t" id="t182" style="left:2233.0px;top:1276.8px;font-size:15.0px;color:#e2e2e2;transform:scaleX(0.9759);">0.00</span>
<div style="left:341.6px;top:1368.4px;width:2069.6px;height:1.8px;background:#eef2f7;"></div>
<svg style="left:393.8px;top:1337.0px;" width="15.5" height="11.0" viewBox="0 0 15 11"><path d="M1.3 0.8 V4 Q1.3 5.6 3 5.6 H10" fill="none" stroke="#cbcbcb" stroke-width="2.3" stroke-linecap="round"/><path d="M9.2 1 L14.4 5.6 L9.2 10.2 z" fill="#cbcbcb"/></svg>
<span class="t" id="t183" style="left:421.3px;top:1335.2px;font-size:15.5px;color:#c2c2c2;transform:scaleX(0.9815);">- Interest &amp; Taxes (65x)</span>
<div style="left:584.4px;top:1335.5px;width:14.8px;height:14.8px;background:#dae6f1;border-radius:50%;"></div>
<div style="left:590.8px;top:1341.5px;width:2.0px;height:5.4px;background:#f3f7fa;"></div>
<div style="left:590.7px;top:1338.5px;width:2.2px;height:2.0px;background:#f3f7fa;border-radius:50%;"></div>
<svg style="left:779.0px;top:1335.0px;" width="9.0" height="14.0" viewBox="0 0 9 14"><path d="M1.8 1.5 L7.2 7 L1.8 12.5" fill="none" stroke="#c6c6c6" stroke-width="1.8" stroke-linecap="round" stroke-linejoin="round"/></svg>
<div style="left:811.2px;top:1320.3px;width:292.2px;height:40.8px;background:#fff;border:1.3px solid #eceef2;border-radius:4px;box-sizing:border-box;"></div>
<div style="left:1056.2px;top:1321.3px;width:46.2px;height:38.8px;background:#f7f8fa;border-radius:0 3px 3px 0;"></div>
<span class="t" id="t184" style="left:1076.0px;top:1333.1px;font-size:15.0px;color:#c9c9c9;">€</span>
<div style="left:1114.7px;top:1320.3px;width:292.2px;height:40.8px;background:#fff;border:1.3px solid #eceef2;border-radius:4px;box-sizing:border-box;"></div>
<div style="left:1359.7px;top:1321.3px;width:46.2px;height:38.8px;background:#f7f8fa;border-radius:0 3px 3px 0;"></div>
<span class="t" id="t185" style="left:1379.5px;top:1333.1px;font-size:15.0px;color:#c9c9c9;">€</span>
<div style="left:1418.2px;top:1320.3px;width:292.2px;height:40.8px;background:#fff;border:1.3px solid #eceef2;border-radius:4px;box-sizing:border-box;"></div>
<div style="left:1663.2px;top:1321.3px;width:46.2px;height:38.8px;background:#f7f8fa;border-radius:0 3px 3px 0;"></div>
<span class="t" id="t186" style="left:1683.0px;top:1333.1px;font-size:15.0px;color:#c9c9c9;">€</span>
<div style="left:1721.7px;top:1320.3px;width:292.2px;height:40.8px;background:#fff;border:1.3px solid #eceef2;border-radius:4px;box-sizing:border-box;"></div>
<div style="left:1966.7px;top:1321.3px;width:46.2px;height:38.8px;background:#f7f8fa;border-radius:0 3px 3px 0;"></div>
<span class="t" id="t187" style="left:1986.5px;top:1333.1px;font-size:15.0px;color:#c9c9c9;">€</span>
<div style="left:2025.2px;top:1320.3px;width:292.2px;height:40.8px;background:#fff;border:1.3px solid #eceef2;border-radius:4px;box-sizing:border-box;"></div>
<div style="left:2270.2px;top:1321.3px;width:46.2px;height:38.8px;background:#f7f8fa;border-radius:0 3px 3px 0;"></div>
<span class="t" id="t188" style="left:2290.0px;top:1333.1px;font-size:15.0px;color:#c9c9c9;">€</span>
<div style="left:341.6px;top:1424.5px;width:2069.6px;height:1.8px;background:#eef2f7;"></div>
<div style="left:373.6px;top:1387.5px;width:23.2px;height:21.6px;background:#fcfcfc;border:1.2px solid #ececec;border-radius:4px;box-sizing:border-box;"><div style="left:5.8px;top:4.6px;width:9px;height:10.4px;background:#dedede;border-radius:1.5px;"></div><div style="left:8px;top:6.6px;width:4.6px;height:6px;background:#e8e8e8;"></div></div>
<svg style="left:420.6px;top:1392.2px;" width="15.5" height="11.0" viewBox="0 0 15 11"><path d="M1.3 0.8 V4 Q1.3 5.6 3 5.6 H10" fill="none" stroke="#cbcbcb" stroke-width="2.3" stroke-linecap="round"/><path d="M9.2 1 L14.4 5.6 L9.2 10.2 z" fill="#cbcbcb"/></svg>
<span class="t" id="t189" style="left:449.5px;top:1390.7px;font-size:14.5px;color:#c2c2c2;font-style:italic;transform:scaleX(1.0045);">= NET INCOME</span>
<div style="left:559.6px;top:1391.7px;width:14.8px;height:14.8px;background:#dae6f1;border-radius:50%;"></div>
<div style="left:566.0px;top:1397.7px;width:2.0px;height:5.4px;background:#f3f7fa;"></div>
<div style="left:565.9px;top:1394.7px;width:2.2px;height:2.0px;background:#f3f7fa;border-radius:50%;"></div>
<svg style="left:779.0px;top:1391.2px;" width="9.0" height="14.0" viewBox="0 0 9 14"><path d="M1.8 1.5 L7.2 7 L1.8 12.5" fill="none" stroke="#c6c6c6" stroke-width="1.8" stroke-linecap="round" stroke-linejoin="round"/></svg>
<div style="left:811.2px;top:1376.5px;width:292.2px;height:40.8px;background:#fff;border:1.3px solid #f4f5f8;border-radius:4px;box-sizing:border-box;"></div>
<div style="left:1056.2px;top:1377.5px;width:46.2px;height:38.8px;background:#fafbfc;border-radius:0 3px 3px 0;"></div>
<span class="t" id="t190" style="left:1076.0px;top:1389.2px;font-size:15.0px;color:#e6e6e6;">€</span>
<span class="t" id="t191" style="left:1019.0px;top:1389.0px;font-size:15.0px;color:#e2e2e2;transform:scaleX(0.9759);">0.00</span>
<div style="left:1114.7px;top:1376.5px;width:292.2px;height:40.8px;background:#fff;border:1.3px solid #f4f5f8;border-radius:4px;box-sizing:border-box;"></div>
<div style="left:1359.7px;top:1377.5px;width:46.2px;height:38.8px;background:#fafbfc;border-radius:0 3px 3px 0;"></div>
<span class="t" id="t192" style="left:1379.5px;top:1389.2px;font-size:15.0px;color:#e6e6e6;">€</span>
<span class="t" id="t193" style="left:1322.5px;top:1389.0px;font-size:15.0px;color:#e2e2e2;transform:scaleX(0.9759);">0.00</span>
<div style="left:1418.2px;top:1376.5px;width:292.2px;height:40.8px;background:#fff;border:1.3px solid #f4f5f8;border-radius:4px;box-sizing:border-box;"></div>
<div style="left:1663.2px;top:1377.5px;width:46.2px;height:38.8px;background:#fafbfc;border-radius:0 3px 3px 0;"></div>
<span class="t" id="t194" style="left:1683.0px;top:1389.2px;font-size:15.0px;color:#e6e6e6;">€</span>
<span class="t" id="t195" style="left:1626.0px;top:1389.0px;font-size:15.0px;color:#e2e2e2;transform:scaleX(0.9759);">0.00</span>
<div style="left:1721.7px;top:1376.5px;width:292.2px;height:40.8px;background:#fff;border:1.3px solid #f4f5f8;border-radius:4px;box-sizing:border-box;"></div>
<div style="left:1966.7px;top:1377.5px;width:46.2px;height:38.8px;background:#fafbfc;border-radius:0 3px 3px 0;"></div>
<span class="t" id="t196" style="left:1986.5px;top:1389.2px;font-size:15.0px;color:#e6e6e6;">€</span>
<span class="t" id="t197" style="left:1929.5px;top:1389.0px;font-size:15.0px;color:#e2e2e2;transform:scaleX(0.9759);">0.00</span>
<div style="left:2025.2px;top:1376.5px;width:292.2px;height:40.8px;background:#fff;border:1.3px solid #f4f5f8;border-radius:4px;box-sizing:border-box;"></div>
<div style="left:2270.2px;top:1377.5px;width:46.2px;height:38.8px;background:#fafbfc;border-radius:0 3px 3px 0;"></div>
<span class="t" id="t198" style="left:2290.0px;top:1389.2px;font-size:15.0px;color:#e6e6e6;">€</span>
<span class="t" id="t199" style="left:2233.0px;top:1389.0px;font-size:15.0px;color:#e2e2e2;transform:scaleX(0.9759);">0.00</span>
<div style="left:341.6px;top:1425.4px;width:2069.6px;height:56.1px;background:#fbfbfb;"></div>
<div style="left:341.6px;top:1480.6px;width:2069.6px;height:1.8px;background:#eef2f7;"></div>
<div style="left:373.6px;top:1443.6px;width:23.2px;height:21.6px;background:#fcfcfc;border:1.2px solid #ececec;border-radius:4px;box-sizing:border-box;"><div style="left:5.8px;top:4.6px;width:9px;height:10.4px;background:#dedede;border-radius:1.5px;"></div><div style="left:8px;top:6.6px;width:4.6px;height:6px;background:#e8e8e8;"></div></div>
<span class="t" id="t200" style="left:406.0px;top:1446.4px;font-size:15.5px;color:#b4b4b4;font-weight:700;transform:scaleX(0.9667);">BS input</span>
<div style="left:473.7px;top:1447.0px;width:14.8px;height:14.8px;background:#dae6f1;border-radius:50%;"></div>
<div style="left:480.1px;top:1453.0px;width:2.0px;height:5.4px;background:#f3f7fa;"></div>
<div style="left:480.0px;top:1450.0px;width:2.2px;height:2.0px;background:#f3f7fa;border-radius:50%;"></div>
<svg style="left:779.0px;top:1447.3px;" width="9.0" height="14.0" viewBox="0 0 9 14"><path d="M1.8 1.5 L7.2 7 L1.8 12.5" fill="none" stroke="#c6c6c6" stroke-width="1.8" stroke-linecap="round" stroke-linejoin="round"/></svg>
<div style="left:811.2px;top:1432.6px;width:292.2px;height:40.8px;background:#fff;border:1.3px solid #f4f5f8;border-radius:4px;box-sizing:border-box;"></div>
<div style="left:1056.2px;top:1433.6px;width:46.2px;height:38.8px;background:#fafbfc;border-radius:0 3px 3px 0;"></div>
<span class="t" id="t201" style="left:1076.0px;top:1445.4px;font-size:15.0px;color:#e6e6e6;">€</span>
<div style="left:1114.7px;top:1432.6px;width:292.2px;height:40.8px;background:#fff;border:1.3px solid #f4f5f8;border-radius:4px;box-sizing:border-box;"></div>
<div style="left:1359.7px;top:1433.6px;width:46.2px;height:38.8px;background:#fafbfc;border-radius:0 3px 3px 0;"></div>
<span class="t" id="t202" style="left:1379.5px;top:1445.4px;font-size:15.0px;color:#e6e6e6;">€</span>
<div style="left:1418.2px;top:1432.6px;width:292.2px;height:40.8px;background:#fff;border:1.3px solid #f4f5f8;border-radius:4px;box-sizing:border-box;"></div>
<div style="left:1663.2px;top:1433.6px;width:46.2px;height:38.8px;background:#fafbfc;border-radius:0 3px 3px 0;"></div>
<span class="t" id="t203" style="left:1683.0px;top:1445.4px;font-size:15.0px;color:#e6e6e6;">€</span>
<div style="left:1721.7px;top:1432.6px;width:292.2px;height:40.8px;background:#fff;border:1.3px solid #f4f5f8;border-radius:4px;box-sizing:border-box;"></div>
<div style="left:1966.7px;top:1433.6px;width:46.2px;height:38.8px;background:#fafbfc;border-radius:0 3px 3px 0;"></div>
<span class="t" id="t204" style="left:1986.5px;top:1445.4px;font-size:15.0px;color:#e6e6e6;">€</span>
<div style="left:2025.2px;top:1432.6px;width:292.2px;height:40.8px;background:#fff;border:1.3px solid #f4f5f8;border-radius:4px;box-sizing:border-box;"></div>
<div style="left:2270.2px;top:1433.6px;width:46.2px;height:38.8px;background:#fafbfc;border-radius:0 3px 3px 0;"></div>
<span class="t" id="t205" style="left:2290.0px;top:1445.4px;font-size:15.0px;color:#e6e6e6;">€</span>
<div style="left:341.6px;top:1536.8px;width:2069.6px;height:1.8px;background:#eef2f7;"></div>
<svg style="left:393.8px;top:1505.4px;" width="15.5" height="11.0" viewBox="0 0 15 11"><path d="M1.3 0.8 V4 Q1.3 5.6 3 5.6 H10" fill="none" stroke="#cbcbcb" stroke-width="2.3" stroke-linecap="round"/><path d="M9.2 1 L14.4 5.6 L9.2 10.2 z" fill="#cbcbcb"/></svg>
<span class="t" id="t206" style="left:421.3px;top:1503.6px;font-size:15.5px;color:#c2c2c2;transform:scaleX(0.9768);">Current Assets</span>
<div style="left:526.7px;top:1503.9px;width:14.8px;height:14.8px;background:#dae6f1;border-radius:50%;"></div>
<div style="left:533.1px;top:1509.9px;width:2.0px;height:5.4px;background:#f3f7fa;"></div>
<div style="left:533.0px;top:1506.9px;width:2.2px;height:2.0px;background:#f3f7fa;border-radius:50%;"></div>
<svg style="left:779.0px;top:1503.4px;" width="9.0" height="14.0" viewBox="0 0 9 14"><path d="M1.8 1.5 L7.2 7 L1.8 12.5" fill="none" stroke="#c6c6c6" stroke-width="1.8" stroke-linecap="round" stroke-linejoin="round"/></svg>
<div style="left:811.2px;top:1488.7px;width:292.2px;height:40.8px;background:#fff;border:1.3px solid #eceef2;border-radius:4px;box-sizing:border-box;"></div>
<div style="left:1056.2px;top:1489.7px;width:46.2px;height:38.8px;background:#f7f8fa;border-radius:0 3px 3px 0;"></div>
<span class="t" id="t207" style="left:1076.0px;top:1501.5px;font-size:15.0px;color:#c9c9c9;">€</span>
<div style="left:1114.7px;top:1488.7px;width:292.2px;height:40.8px;background:#fff;border:1.3px solid #eceef2;border-radius:4px;box-sizing:border-box;"></div>
<div style="left:1359.7px;top:1489.7px;width:46.2px;height:38.8px;background:#f7f8fa;border-radius:0 3px 3px 0;"></div>
<span class="t" id="t208" style="left:1379.5px;top:1501.5px;font-size:15.0px;color:#c9c9c9;">€</span>
<div style="left:1418.2px;top:1488.7px;width:292.2px;height:40.8px;background:#fff;border:1.3px solid #eceef2;border-radius:4px;box-sizing:border-box;"></div>
<div style="left:1663.2px;top:1489.7px;width:46.2px;height:38.8px;background:#f7f8fa;border-radius:0 3px 3px 0;"></div>
<span class="t" id="t209" style="left:1683.0px;top:1501.5px;font-size:15.0px;color:#c9c9c9;">€</span>
<div style="left:1721.7px;top:1488.7px;width:292.2px;height:40.8px;background:#fff;border:1.3px solid #eceef2;border-radius:4px;box-sizing:border-box;"></div>
<div style="left:1966.7px;top:1489.7px;width:46.2px;height:38.8px;background:#f7f8fa;border-radius:0 3px 3px 0;"></div>
<span class="t" id="t210" style="left:1986.5px;top:1501.5px;font-size:15.0px;color:#c9c9c9;">€</span>
<div style="left:2025.2px;top:1488.7px;width:292.2px;height:40.8px;background:#fff;border:1.3px solid #eceef2;border-radius:4px;box-sizing:border-box;"></div>
<div style="left:2270.2px;top:1489.7px;width:46.2px;height:38.8px;background:#f7f8fa;border-radius:0 3px 3px 0;"></div>
<span class="t" id="t211" style="left:2290.0px;top:1501.5px;font-size:15.0px;color:#c9c9c9;">€</span>
<div style="left:341.6px;top:1592.9px;width:2069.6px;height:1.8px;background:#eef2f7;"></div>
<svg style="left:393.8px;top:1561.5px;" width="15.5" height="11.0" viewBox="0 0 15 11"><path d="M1.3 0.8 V4 Q1.3 5.6 3 5.6 H10" fill="none" stroke="#cbcbcb" stroke-width="2.3" stroke-linecap="round"/><path d="M9.2 1 L14.4 5.6 L9.2 10.2 z" fill="#cbcbcb"/></svg>
<span class="t" id="t212" style="left:421.3px;top:1559.7px;font-size:15.5px;color:#c2c2c2;transform:scaleX(0.9671);">Total Assets</span>
<div style="left:507.4px;top:1560.0px;width:14.8px;height:14.8px;background:#dae6f1;border-radius:50%;"></div>
<div style="left:513.8px;top:1566.0px;width:2.0px;height:5.4px;background:#f3f7fa;"></div>
<div style="left:513.7px;top:1563.0px;width:2.2px;height:2.0px;background:#f3f7fa;border-radius:50%;"></div>
<svg style="left:779.0px;top:1559.5px;" width="9.0" height="14.0" viewBox="0 0 9 14"><path d="M1.8 1.5 L7.2 7 L1.8 12.5" fill="none" stroke="#c6c6c6" stroke-width="1.8" stroke-linecap="round" stroke-linejoin="round"/></svg>
<div style="left:811.2px;top:1544.8px;width:292.2px;height:40.8px;background:#fff;border:1.3px solid #eceef2;border-radius:4px;box-sizing:border-box;"></div>
<div style="left:1056.2px;top:1545.8px;width:46.2px;height:38.8px;background:#f7f8fa;border-radius:0 3px 3px 0;"></div>
<span class="t" id="t213" style="left:1076.0px;top:1557.6px;font-size:15.0px;color:#c9c9c9;">€</span>
<div style="left:1114.7px;top:1544.8px;width:292.2px;height:40.8px;background:#fff;border:1.3px solid #eceef2;border-radius:4px;box-sizing:border-box;"></div>
<div style="left:1359.7px;top:1545.8px;width:46.2px;height:38.8px;background:#f7f8fa;border-radius:0 3px 3px 0;"></div>
<span class="t" id="t214" style="left:1379.5px;top:1557.6px;font-size:15.0px;color:#c9c9c9;">€</span>
<div style="left:1418.2px;top:1544.8px;width:292.2px;height:40.8px;background:#fff;border:1.3px solid #eceef2;border-radius:4px;box-sizing:border-box;"></div>
<div style="left:1663.2px;top:1545.8px;width:46.2px;height:38.8px;background:#f7f8fa;border-radius:0 3px 3px 0;"></div>
<span class="t" id="t215" style="left:1683.0px;top:1557.6px;font-size:15.0px;color:#c9c9c9;">€</span>
<div style="left:1721.7px;top:1544.8px;width:292.2px;height:40.8px;background:#fff;border:1.3px solid #eceef2;border-radius:4px;box-sizing:border-box;"></div>
<div style="left:1966.7px;top:1545.8px;width:46.2px;height:38.8px;background:#f7f8fa;border-radius:0 3px 3px 0;"></div>
<span class="t" id="t216" style="left:1986.5px;top:1557.6px;font-size:15.0px;color:#c9c9c9;">€</span>
<div style="left:2025.2px;top:1544.8px;width:292.2px;height:40.8px;background:#fff;border:1.3px solid #eceef2;border-radius:4px;box-sizing:border-box;"></div>
<div style="left:2270.2px;top:1545.8px;width:46.2px;height:38.8px;background:#f7f8fa;border-radius:0 3px 3px 0;"></div>
<span class="t" id="t217" style="left:2290.0px;top:1557.6px;font-size:15.0px;color:#c9c9c9;">€</span>
<div style="left:341.6px;top:1649.0px;width:2069.6px;height:1.8px;background:#eef2f7;"></div>
<svg style="left:393.8px;top:1617.7px;" width="15.5" height="11.0" viewBox="0 0 15 11"><path d="M1.3 0.8 V4 Q1.3 5.6 3 5.6 H10" fill="none" stroke="#cbcbcb" stroke-width="2.3" stroke-linecap="round"/><path d="M9.2 1 L14.4 5.6 L9.2 10.2 z" fill="#cbcbcb"/></svg>
<span class="t" id="t218" style="left:421.3px;top:1615.9px;font-size:15.5px;color:#c2c2c2;transform:scaleX(0.9937);">Current Liabilities</span>
<div style="left:546.4px;top:1616.2px;width:14.8px;height:14.8px;background:#dae6f1;border-radius:50%;"></div>
<div style="left:552.8px;top:1622.2px;width:2.0px;height:5.4px;background:#f3f7fa;"></div>
<div style="left:552.7px;top:1619.2px;width:2.2px;height:2.0px;background:#f3f7fa;border-radius:50%;"></div>
<svg style="left:779.0px;top:1615.7px;" width="9.0" height="14.0" viewBox="0 0 9 14"><path d="M1.8 1.5 L7.2 7 L1.8 12.5" fill="none" stroke="#c6c6c6" stroke-width="1.8" stroke-linecap="round" stroke-linejoin="round"/></svg>
<div style="left:811.2px;top:1601.0px;width:292.2px;height:40.8px;background:#fff;border:1.3px solid #eceef2;border-radius:4px;box-sizing:border-box;"></div>
<div style="left:1056.2px;top:1602.0px;width:46.2px;height:38.8px;background:#f7f8fa;border-radius:0 3px 3px 0;"></div>
<span class="t" id="t219" style="left:1076.0px;top:1613.7px;font-size:15.0px;color:#c9c9c9;">€</span>
<div style="left:1114.7px;top:1601.0px;width:292.2px;height:40.8px;background:#fff;border:1.3px solid #eceef2;border-radius:4px;box-sizing:border-box;"></div>
<div style="left:1359.7px;top:1602.0px;width:46.2px;height:38.8px;background:#f7f8fa;border-radius:0 3px 3px 0;"></div>
<span class="t" id="t220" style="left:1379.5px;top:1613.7px;font-size:15.0px;color:#c9c9c9;">€</span>
<div style="left:1418.2px;top:1601.0px;width:292.2px;height:40.8px;background:#fff;border:1.3px solid #eceef2;border-radius:4px;box-sizing:border-box;"></div>
<div style="left:1663.2px;top:1602.0px;width:46.2px;height:38.8px;background:#f7f8fa;border-radius:0 3px 3px 0;"></div>
<span class="t" id="t221" style="left:1683.0px;top:1613.7px;font-size:15.0px;color:#c9c9c9;">€</span>
<div style="left:1721.7px;top:1601.0px;width:292.2px;height:40.8px;background:#fff;border:1.3px solid #eceef2;border-radius:4px;box-sizing:border-box;"></div>
<div style="left:1966.7px;top:1602.0px;width:46.2px;height:38.8px;background:#f7f8fa;border-radius:0 3px 3px 0;"></div>
<span class="t" id="t222" style="left:1986.5px;top:1613.7px;font-size:15.0px;color:#c9c9c9;">€</span>
<div style="left:2025.2px;top:1601.0px;width:292.2px;height:40.8px;background:#fff;border:1.3px solid #eceef2;border-radius:4px;box-sizing:border-box;"></div>
<div style="left:2270.2px;top:1602.0px;width:46.2px;height:38.8px;background:#f7f8fa;border-radius:0 3px 3px 0;"></div>
<span class="t" id="t223" style="left:2290.0px;top:1613.7px;font-size:15.0px;color:#c9c9c9;">€</span>
<div style="left:341.6px;top:1705.1px;width:2069.6px;height:1.8px;background:#eef2f7;"></div>
<svg style="left:393.8px;top:1673.8px;" width="15.5" height="11.0" viewBox="0 0 15 11"><path d="M1.3 0.8 V4 Q1.3 5.6 3 5.6 H10" fill="none" stroke="#cbcbcb" stroke-width="2.3" stroke-linecap="round"/><path d="M9.2 1 L14.4 5.6 L9.2 10.2 z" fill="#cbcbcb"/></svg>
<span class="t" id="t224" style="left:421.3px;top:1672.0px;font-size:15.5px;color:#c2c2c2;transform:scaleX(0.9919);">Total Liabilities</span>
<div style="left:527.4px;top:1672.3px;width:14.8px;height:14.8px;background:#dae6f1;border-radius:50%;"></div>
<div style="left:533.8px;top:1678.3px;width:2.0px;height:5.4px;background:#f3f7fa;"></div>
<div style="left:533.7px;top:1675.3px;width:2.2px;height:2.0px;background:#f3f7fa;border-radius:50%;"></div>
<svg style="left:779.0px;top:1671.8px;" width="9.0" height="14.0" viewBox="0 0 9 14"><path d="M1.8 1.5 L7.2 7 L1.8 12.5" fill="none" stroke="#c6c6c6" stroke-width="1.8" stroke-linecap="round" stroke-linejoin="round"/></svg>
<div style="left:811.2px;top:1657.1px;width:292.2px;height:40.8px;background:#fff;border:1.3px solid #eceef2;border-radius:4px;box-sizing:border-box;"></div>
<div style="left:1056.2px;top:1658.1px;width:46.2px;height:38.8px;background:#f7f8fa;border-radius:0 3px 3px 0;"></div>
<span class="t" id="t225" style="left:1076.0px;top:1669.9px;font-size:15.0px;color:#c9c9c9;">€</span>
<div style="left:1114.7px;top:1657.1px;width:292.2px;height:40.8px;background:#fff;border:1.3px solid #eceef2;border-radius:4px;box-sizing:border-box;"></div>
<div style="left:1359.7px;top:1658.1px;width:46.2px;height:38.8px;background:#f7f8fa;border-radius:0 3px 3px 0;"></div>
<span class="t" id="t226" style="left:1379.5px;top:1669.9px;font-size:15.0px;color:#c9c9c9;">€</span>
<div style="left:1418.2px;top:1657.1px;width:292.2px;height:40.8px;background:#fff;border:1.3px solid #eceef2;border-radius:4px;box-sizing:border-box;"></div>
<div style="left:1663.2px;top:1658.1px;width:46.2px;height:38.8px;background:#f7f8fa;border-radius:0 3px 3px 0;"></div>
<span class="t" id="t227" style="left:1683.0px;top:1669.9px;font-size:15.0px;color:#c9c9c9;">€</span>
<div style="left:1721.7px;top:1657.1px;width:292.2px;height:40.8px;background:#fff;border:1.3px solid #eceef2;border-radius:4px;box-sizing:border-box;"></div>
<div style="left:1966.7px;top:1658.1px;width:46.2px;height:38.8px;background:#f7f8fa;border-radius:0 3px 3px 0;"></div>
<span class="t" id="t228" style="left:1986.5px;top:1669.9px;font-size:15.0px;color:#c9c9c9;">€</span>
<div style="left:2025.2px;top:1657.1px;width:292.2px;height:40.8px;background:#fff;border:1.3px solid #eceef2;border-radius:4px;box-sizing:border-box;"></div>
<div style="left:2270.2px;top:1658.1px;width:46.2px;height:38.8px;background:#f7f8fa;border-radius:0 3px 3px 0;"></div>
<span class="t" id="t229" style="left:2290.0px;top:1669.9px;font-size:15.0px;color:#c9c9c9;">€</span>
<div style="left:805.1px;top:415.6px;width:1.8px;height:1361.4px;background:#f0f3f8;"></div>
<div style="left:1108.6px;top:415.6px;width:1.8px;height:1361.4px;background:#f0f3f8;"></div>
<div style="left:1412.1px;top:415.6px;width:1.8px;height:1361.4px;background:#f0f3f8;"></div>
<div style="left:1715.6px;top:415.6px;width:1.8px;height:1361.4px;background:#f0f3f8;"></div>
<div style="left:2019.1px;top:415.6px;width:1.8px;height:1361.4px;background:#f0f3f8;"></div>
<div style="left:2322.6px;top:415.6px;width:1.8px;height:1361.4px;background:#f0f3f8;"></div>
<div style="left:340.8px;top:352.3px;width:1.6px;height:1424.7px;background:#e3eaf0;"></div>
<div style="left:2410.4px;top:415.3px;width:1.6px;height:1361.7px;background:#eef1f4;"></div>
<div style="left:2305.0px;top:1588.3px;width:107.0px;height:58.9px;background:#f6f8fa;border-radius:5px;box-shadow:0 2px 8px rgba(120,140,170,.18);"></div>
<div style="left:2318.0px;top:1596.5px;width:36.3px;height:40.9px;background:#c5d3e0;border-radius:4px;"></div>
<div style="left:2363.0px;top:1596.5px;width:37.0px;height:40.9px;background:#c9d7e2;border-radius:4px;"></div>
<svg style="left:2330.5px;top:1611.5px;" width="11.0" height="11.0" viewBox="0 0 11 11"><path d="M1 1 L10 10 M10 1 L1 10" stroke="#eef3f7" stroke-width="1.8" stroke-linecap="round"/></svg>
<svg style="left:2374.5px;top:1610.0px;" width="14.5" height="14.0" viewBox="0 0 14.50 14.00"><path d="M1.89 0 H10.44 L14.50 3.64 V12.12 Q14.50 14.00 12.62 14.00 H1.89 Q0 14.00 0 12.12 V1.89 Q0 0 1.89 0 z" fill="#eef3f7"/><rect x="2.61" y="2.38" width="7.25" height="2.80" rx="0.43" fill="#c9d7e2"/><circle cx="7.25" cy="9.52" r="1.81" fill="#c9d7e2"/></svg>
</div>
<div id="chrome">
<div style="left:58.4px;top:46.6px;width:28.6px;height:28.6px;background:#b5b5b5;border-radius:50%;"></div>
<div style="left:101.3px;top:46.6px;width:28.6px;height:28.6px;background:#b5b5b5;border-radius:50%;"></div>
<div style="left:144.2px;top:46.6px;width:28.6px;height:28.6px;background:#b5b5b5;border-radius:50%;"></div>
<svg style="left:224.0px;top:39.0px;" width="30.0" height="46.0" viewBox="0 0 30 46"><path d="M24 5 L7 23 L24 41" fill="none" stroke="#b5b5b5" stroke-width="4" stroke-linecap="round" stroke-linejoin="round"/></svg>
<svg style="left:292.0px;top:39.0px;" width="30.0" height="46.0" viewBox="0 0 30 46"><path d="M6 5 L23 23 L6 41" fill="none" stroke="#b5b5b5" stroke-width="4" stroke-linecap="round" stroke-linejoin="round"/></svg>
<svg style="left:364.0px;top:39.0px;" width="46.0" height="46.0" viewBox="0 0 46 46"><g fill="none" stroke="#b5b5b5" stroke-width="3.6" stroke-linecap="round" stroke-linejoin="round"><path d="M6.5 20 A17 17 0 0 1 37 13"/><path d="M38 4 L38 14 L28 14"/><path d="M39.5 26 A17 17 0 0 1 9 33"/><path d="M8 42 L8 32 L18 32"/></g></svg>
<div style="left:464.0px;top:30.0px;width:1778.5px;height:63.0px;background:#dfdfdd;"></div>
<svg style="left:2290.0px;top:38.0px;" width="34.0" height="48.0" viewBox="0 0 34 48"><path d="M17 5 L17 43 M7.5 33 L17 43 L26.5 33" fill="none" stroke="#b5b5b5" stroke-width="4" stroke-linecap="round" stroke-linejoin="round"/></svg>
<div style="left:2364.5px;top:41.0px;width:12.6px;height:12.6px;background:#b5b5b5;border-radius:50%;"></div>
<div style="left:2364.5px;top:54.7px;width:12.6px;height:12.6px;background:#b5b5b5;border-radius:50%;"></div>
<div style="left:2364.5px;top:69.2px;width:12.6px;height:12.6px;background:#b5b5b5;border-radius:50%;"></div>
<div style="left:0.0px;top:113.0px;width:2531.0px;height:2.4px;background:#e2e2e0;"></div>
</div>
<div id="frame"></div>
<div style="left:2003.0px;top:1389.4px;width:323.3px;height:180.7px;background:#fff;border-radius:17px;box-shadow:0 55px 140px 0 rgba(55,78,135,.36),0 22px 50px 0 rgba(55,78,135,.22),0 34px 64px -24px rgba(50,78,138,.40);"></div>
<div style="left:2039.4px;top:1418.3px;width:109.8px;height:122.9px;background:#5382a6;border-radius:10px;"></div>
<div style="left:2177.5px;top:1418.3px;width:112.2px;height:122.9px;background:#5382a6;border-radius:10px;"></div>
<svg style="left:2075.0px;top:1462.0px;" width="40.0" height="40.0" viewBox="0 0 40 40"><path d="M6.5 6.5 L33.2 32.8 M33.2 6.5 L6.5 32.8" stroke="#fff" stroke-width="6" stroke-linecap="round"/></svg>
<svg style="left:2211.4px;top:1459.8px;" width="44.4" height="43.0" viewBox="0 0 44.40 43.00"><path d="M5.77 0 H31.97 L44.40 11.18 V37.23 Q44.40 43.00 38.63 43.00 H5.77 Q0 43.00 0 37.23 V5.77 Q0 0 5.77 0 z" fill="#fff"/><rect x="7.99" y="7.31" width="22.20" height="8.60" rx="1.33" fill="#5382a6"/><circle cx="22.20" cy="29.24" r="5.55" fill="#5382a6"/></svg>
<div style="left:2281.4px;top:1355.4px;width:88.6px;height:70.8px;overflow:hidden;border-radius:34px;"><div style="left:0;top:-5px;width:88.6px;height:80.8px;background:#ff9e40;border-radius:50%;"></div></div>
<span class="t" id="t230" style="left:2305.5px;top:1374.7px;font-size:34.6px;color:#fff;font-weight:700;transform:scaleX(1.0918);">18</span>
</body></html>
